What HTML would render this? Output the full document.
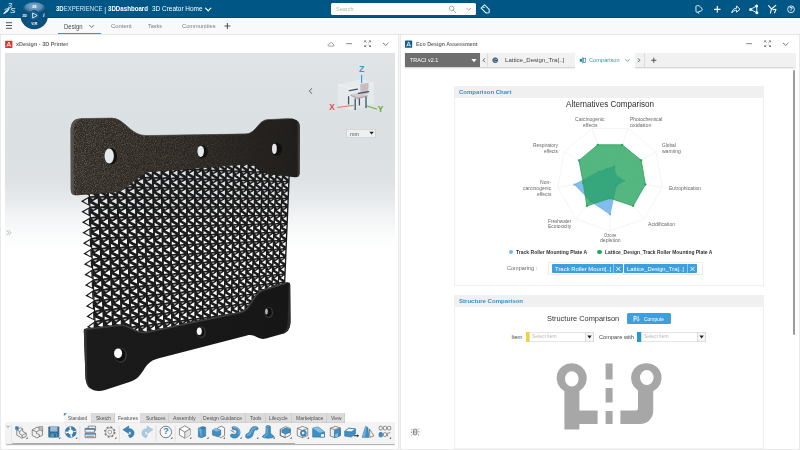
<!DOCTYPE html>
<html lang="en"><head><meta charset="utf-8"><title>3DEXPERIENCE | 3DDashboard - 3D Creator Home</title>
<style>
html,body{margin:0;padding:0}
body{width:800px;height:450px;overflow:hidden;position:relative;background:#f5f5f5;font-family:"Liberation Sans",sans-serif;}
div,header,nav,section,main,svg.a,.t{position:absolute;box-sizing:border-box}
.t{white-space:nowrap;transform-origin:0 50%;display:block}
svg{overflow:visible}
</style></head><body>
<header style="left:0px;top:0px;width:800px;height:18.2px;background:#005685;box-shadow:inset 0 -0.7px 0 #004873;">
<span class="t" style="left:7.79px;top:1.48px;font-size:7.6px;line-height:9.12px;color:#fff;font-style:italic;">3</span>
<span class="t" style="left:9.9px;top:6.26px;font-size:7.8px;line-height:9.36px;color:#fff;font-style:italic;">S</span>
<svg class="a" style="left:2px;top:7px" width="9" height="9" viewBox="2 7 9 9" >
<path d="M2.8 14.6 C4.2 11.4 6.6 9.4 9.8 8.2 C9.2 10.8 6.8 12.8 2.8 14.6 Z" fill="#e8f1f7"/><path d="M4.4 9.6 C6 8.8 7.6 8.5 9.4 8.4" stroke="#fff" stroke-width="0.7" fill="none"/>
</svg>
<span class="t" style="left:55.5px;top:5.23px;font-size:7px;line-height:8.4px;color:#dbe8f1;transform:scaleX(0.860);"><b style="color:#fff">3D</b>EXPERIENCE</span>
<span class="t" style="left:104.2px;top:4.64px;font-size:7.5px;line-height:9px;color:#dbe8f1;">|</span>
<span class="t" style="left:108px;top:5.23px;font-size:7px;line-height:8.4px;color:#fff;font-weight:bold;transform:scaleX(0.879);">3DDashboard</span>
<span class="t" style="left:152px;top:5.23px;font-size:7px;line-height:8.4px;color:#fff;transform:scaleX(0.922);">3D Creator Home</span>
<svg class="a" style="left:204px;top:5px" width="9" height="9" viewBox="204 5 9 9" >
<path d="M205.6 8.2 L208.2 10.8 L210.8 8.2" fill="none" stroke="#fff" stroke-width="1.2" stroke-linecap="round" stroke-linejoin="round"/>
</svg>
<div style="left:331.2px;top:3px;width:145px;height:12px;background:#fff;border-radius:1.5px;">
<span class="t" style="left:5.1px;top:2.94px;font-size:5.6px;line-height:6.72px;color:#b3b3b3;transform:scaleX(0.986);">Search</span>
<svg class="a" style="left:114.8px;top:0px" width="30" height="12" viewBox="446 3 30 12" >
<circle cx="451.6" cy="8.4" r="2.3" fill="none" stroke="#8a8a8a" stroke-width="0.7"/><path d="M453.3 10.2 L455.6 12.6" stroke="#8a8a8a" stroke-width="0.8" stroke-linecap="round"/>
<path d="M466.9 8.3 L468.8 10.2 L470.7 8.3" fill="none" stroke="#777" stroke-width="0.7" stroke-linecap="round" stroke-linejoin="round"/>
</svg>
</div>
<svg class="a" style="left:480px;top:0px" width="320" height="18" viewBox="480 0 320 18" >
<g transform="translate(485.8 9.4) rotate(-45)"><path d="M-4.2 -2.4 H2.6 L4.6 0 L2.6 2.4 H-4.2 Z" transform="rotate(90)" fill="none" stroke="#fff" stroke-width="1" stroke-linejoin="round"/></g>
<circle cx="483.9" cy="7.4" r="0.7" fill="#fff"/>
<path d="M696.2 6 C697.7 4.8 700.2 5.7 702 8.9 C702.6 9.9 702 10.7 701.1 10.9 L697.4 12.3 C696.5 12.6 696 12 696 11.2 Z M698 12.2 L698.8 13.4" fill="none" stroke="#fff" stroke-width="0.9" stroke-linejoin="round" stroke-linecap="round"/>
<path d="M714.1 9.3 H720.5 M717.3 6.1 V12.5" stroke="#fff" stroke-width="1.15" fill="none"/>
<path d="M731.8 12.9 C732.2 9.6 734.2 8.2 736.6 8.2 V6 L740 9.2 L736.6 12.2 V10.2 C734.6 10.2 733 11 731.8 12.9 Z" fill="none" stroke="#fff" stroke-width="0.9" stroke-linejoin="round"/>
<path d="M750.6 9.4 L756.6 5.9 L756.9 12.8 Z" fill="none" stroke="#fff" stroke-width="0.9"/><circle cx="750.6" cy="9.4" r="1.5" fill="#fff"/><circle cx="756.6" cy="5.9" r="1.5" fill="#fff"/><circle cx="756.9" cy="12.8" r="1.5" fill="#fff"/>
<path d="M768.6 5.6 L771.4 9 L775.8 5.4 M771.4 9 L770.4 13.2 M773 9.6 L776 9.2 L774.6 12.8" fill="none" stroke="#fff" stroke-width="1.1" stroke-linecap="round" stroke-linejoin="round"/>
<circle cx="791" cy="9.3" r="3.4" fill="none" stroke="#fff" stroke-width="0.85"/>
</svg>
<span class="t" style="left:789.29px;top:6.14px;font-size:5.6px;line-height:6.72px;color:#fff;font-weight:bold;">?</span>
</header>
<nav style="left:0px;top:18.2px;width:800px;height:16.4px;background:#f9f9f9;box-shadow:inset 0 -0.8px 0 #dcdcdc;">
<svg class="a" style="left:4px;top:1.8px" width="12" height="12" viewBox="4 20 12 12" >
<path d="M6 22.7 H12 M6 25.5 H12 M6 28.3 H12" stroke="#555" stroke-width="1" fill="none"/>
</svg>
<span class="t" style="left:64px;top:4.48px;font-size:6.4px;line-height:7.68px;color:#4a4a4a;transform:scaleX(0.934);">Design</span>
<svg class="a" style="left:88px;top:3.8px" width="8" height="8" viewBox="88 22 8 8" >
<path d="M89.6 25.4 L91.7 27.5 L93.8 25.4" fill="none" stroke="#555" stroke-width="0.8" stroke-linecap="round" stroke-linejoin="round"/>
</svg>
<div style="left:58px;top:15.1px;width:43.2px;height:1.2px;background:#4a90c4;">
</div>
<span class="t" style="left:110.9px;top:4.71px;font-size:6px;line-height:7.2px;color:#7d7d7d;transform:scaleX(0.980);">Content</span>
<span class="t" style="left:148.1px;top:4.71px;font-size:6px;line-height:7.2px;color:#7d7d7d;transform:scaleX(0.913);">Tasks</span>
<span class="t" style="left:181.7px;top:4.71px;font-size:6px;line-height:7.2px;color:#7d7d7d;transform:scaleX(0.957);">Communities</span>
<svg class="a" style="left:222px;top:2.8px" width="10" height="10" viewBox="222 21 10 10" >
<path d="M224.4 26 H230.4 M227.4 23 V29" stroke="#555" stroke-width="1.1" fill="none"/>
</svg>
</nav>
<svg class="a" style="left:18px;top:0px" width="34" height="32" viewBox="18 0 34 32" >
<defs><radialGradient id="cg" cx="0.5" cy="0.3" r="0.6"><stop offset="0" stop-color="#8ab3cf"/><stop offset="0.6" stop-color="#5a90b5" stop-opacity="0.9"/><stop offset="1" stop-color="#0b517f" stop-opacity="0"/></radialGradient></defs>
<circle cx="34.2" cy="15.5" r="13.8" fill="#0b4f7d"/>
<ellipse cx="34.2" cy="8.9" rx="11.4" ry="6.6" fill="url(#cg)"/>
<circle cx="34.2" cy="15.5" r="5.1" fill="#12608f" stroke="#0a4770" stroke-width="0.6"/>
<path d="M32.6 12.9 L37.2 15.5 L32.6 18.1 Z" fill="none" stroke="#fff" stroke-width="0.8" stroke-linejoin="round"/>
<path d="M27.2 22.6 L29.4 20.4 M41.2 22.6 L39 20.4 M27.4 8.6 L29.4 10.6 M41 8.6 L39 10.6" stroke="#3f7da6" stroke-width="0.4"/>
</svg>
<span class="t" style="left:22.3px;top:13.5px;font-size:3.6px;line-height:4.32px;color:#fff;font-weight:bold;">3D</span>
<span class="t" style="left:31.21px;top:21.99px;font-size:3.8px;line-height:4.56px;color:#fff;font-weight:bold;">V,R</span>
<span class="t" style="left:42.91px;top:11.69px;font-size:5px;line-height:6px;color:#fff;font-weight:bold;font-style:italic;">i</span>
<span class="t" style="left:32px;top:4.5px;font-size:3.6px;line-height:4.32px;color:#fff;font-weight:bold;font-style:italic;">3S</span>
<section style="left:1px;top:35px;width:397.2px;height:413.6px;background:#fff;box-shadow:0 0 0 0.7px #e4e4e4;">
<svg class="a" style="left:4px;top:5px" width="8" height="8" viewBox="5 40 8 8" >
<rect x="5.2" y="40.8" width="7.2" height="7.2" rx="0.5" fill="#d9352b"/><path d="M6.8 46.6 L8.8 42 L10.8 46.6 M7.3 45.4 H10.3" fill="none" stroke="#fff" stroke-width="0.8"/>
</svg>
<span class="t" style="left:15.4px;top:6.36px;font-size:5.4px;line-height:6.48px;color:#6b6b6b;font-weight:bold;transform:scaleX(1.015);">xDesign - 3D Printer</span>
<svg class="a" style="left:319px;top:3px" width="76" height="12" viewBox="320 38 76 12" >
<path d="M328.6 46.1 H333 C334.2 46.1 334.4 44.4 333 44.2 C332.9 42.3 330.3 42 329.8 43.7 C328 43.5 327.6 45.9 328.6 46.1 Z" fill="none" stroke="#666" stroke-width="0.6" stroke-linejoin="round"/>
<path d="M346.2 43.7 H352" stroke="#666" stroke-width="0.8"/>
<path d="M364.4 40.5 h2.0 l-2.0 2.0 Z M370.8 40.5 h-2.0 l2.0 2.0 Z M364.4 46.9 h2.0 l-2.0 -2.0 Z M370.8 46.9 h-2.0 l2.0 -2.0 Z" fill="#555"/><path d="M365.0 41.1 L366.7 42.8 M370.2 41.1 L368.5 42.8 M365.0 46.3 L366.7 44.6 M370.2 46.3 L368.5 44.6" stroke="#555" stroke-width="0.6" fill="none"/>
<path d="M383.3 43.2 L385.7 45.4 L388.1 43.2" fill="none" stroke="#555" stroke-width="0.8" stroke-linecap="round" stroke-linejoin="round"/>
</svg>
<div style="left:4px;top:18px;width:389.7px;height:395.5px;background:linear-gradient(180deg,#e0e4e7 0%,#dce1e4 12%,#dbe0e3 24%,#dee2e5 32%,#e8ebed 37.5%,#f2f4f5 41.5%,#fbfcfc 46.5%,#fff 50%);overflow:hidden;">
<svg class="a" style="left:0px;top:0px" width="389.7" height="395.5" viewBox="5 53 389.7 395.5" >
<defs>
<filter id="spk" x="0" y="0" width="100%" height="100%"><feTurbulence type="fractalNoise" baseFrequency="1.1" numOctaves="2" seed="3" result="n"/><feColorMatrix in="n" type="matrix" values="0 0 0 0 0.46  0 0 0 0 0.36  0 0 0 0 0.25  1.3 0 0 0 -0.50" result="c"/><feComposite in="c" in2="SourceGraphic" operator="in"/></filter>
<linearGradient id="tb" x1="0" y1="0" x2="1" y2="0"><stop offset="0" stop-color="#2f2b27"/><stop offset="0.5" stop-color="#2a2623"/><stop offset="1" stop-color="#1f1d1b"/></linearGradient>
<linearGradient id="bb" x1="0" y1="0" x2="1" y2="0"><stop offset="0" stop-color="#1b1b1b"/><stop offset="1" stop-color="#161616"/></linearGradient>
<linearGradient id="spg" x1="70" y1="0" x2="300" y2="0" gradientUnits="userSpaceOnUse"><stop offset="0" stop-color="#fff" stop-opacity="0.75"/><stop offset="0.45" stop-color="#fff" stop-opacity="0.5"/><stop offset="0.8" stop-color="#fff" stop-opacity="0.12"/><stop offset="1" stop-color="#fff" stop-opacity="0.05"/></linearGradient><mask id="spm" maskUnits="userSpaceOnUse" x="60" y="110" width="250" height="100"><rect x="60" y="110" width="250" height="100" fill="url(#spg)"/></mask>
<linearGradient id="bgg" gradientUnits="userSpaceOnUse" x1="0" y1="53" x2="0" y2="448.5"><stop offset="0" stop-color="#e0e4e7"/><stop offset="0.12" stop-color="#dce1e4"/><stop offset="0.24" stop-color="#dbe0e3"/><stop offset="0.32" stop-color="#dee2e5"/><stop offset="0.375" stop-color="#e8ebed"/><stop offset="0.415" stop-color="#f2f4f5"/><stop offset="0.465" stop-color="#fbfcfc"/><stop offset="0.5" stop-color="#fff"/></linearGradient>
</defs>
<path d="M87.0 155.4 L289.5 164.9 L283.1 316.1 L95.3 342.6 Z" fill="#1c1c1c"/>
<path d="M87.4 155.0L78.8 159.4L87.8 164.5ZM87.8 165.4L79.3 169.9L88.3 174.9ZM88.3 175.8L79.8 180.3L88.7 185.3ZM88.8 186.2L80.3 190.8L89.2 195.7ZM89.2 196.6L80.8 201.3L89.6 206.1ZM89.7 207.0L81.3 211.8L90.1 216.5ZM90.1 217.4L81.8 222.3L90.6 226.9ZM90.6 227.8L82.3 232.8L91.0 237.3ZM91.1 238.2L82.8 243.3L91.5 247.7ZM91.5 248.5L83.3 253.7L92.0 258.1ZM92.0 258.9L83.8 264.2L92.4 268.5ZM92.5 269.3L84.3 274.7L92.9 278.9ZM92.9 279.7L84.8 285.2L93.4 289.3ZM93.4 290.1L85.3 295.7L93.8 299.7ZM93.9 300.5L85.8 306.2L94.3 310.1ZM94.3 310.9L86.3 316.6L94.7 320.5ZM94.8 321.3L86.8 327.1L95.2 330.9ZM95.2 331.7L87.3 337.6L95.7 341.3Z" fill="#1c1c1c"/>
<path d="M289.5 164.9 L283.1 316.1" stroke="#1c1c1c" stroke-width="1.6"/>
<path d="M89.0 156.2L93.3 156.2L91.0 158.1ZM89.4 166.6L93.7 166.5L91.4 168.5ZM89.9 177.0L94.1 176.9L91.9 178.9ZM90.3 187.3L94.6 187.2L92.3 189.2ZM90.8 197.7L95.0 197.5L92.8 199.6ZM91.2 208.1L95.5 207.9L93.2 210.0ZM91.7 218.5L95.9 218.2L93.7 220.3ZM92.2 228.9L96.3 228.6L94.1 230.7ZM92.6 239.2L96.8 238.9L94.6 241.0ZM93.1 249.6L97.2 249.2L95.0 251.4ZM93.5 260.0L97.7 259.6L95.5 261.8ZM94.0 270.4L98.1 269.9L95.9 272.1ZM94.4 280.8L98.5 280.3L96.4 282.5ZM94.9 291.2L99.0 290.6L96.8 292.9ZM95.4 301.5L99.4 300.9L97.3 303.2ZM95.8 311.9L99.9 311.3L97.7 313.6ZM96.3 322.3L100.3 321.6L98.2 323.9ZM96.7 332.7L100.7 332.0L98.6 334.3ZM98.7 156.6L102.9 156.6L100.7 158.6ZM99.1 166.9L103.3 166.9L101.1 168.8ZM99.6 177.2L103.7 177.1L101.5 179.1ZM100.0 187.5L104.2 187.4L101.9 189.4ZM100.4 197.8L104.6 197.6L102.4 199.6ZM100.8 208.1L105.0 207.9L102.8 209.9ZM101.2 218.4L105.4 218.1L103.2 220.2ZM101.6 228.6L105.8 228.3L103.6 230.4ZM102.1 238.9L106.2 238.6L104.0 240.7ZM102.5 249.2L106.6 248.8L104.4 251.0ZM102.9 259.5L107.0 259.1L104.8 261.2ZM103.3 269.8L107.4 269.3L105.2 271.5ZM103.7 280.1L107.8 279.6L105.6 281.8ZM104.1 290.4L108.2 289.8L106.0 292.0ZM104.6 300.6L108.6 300.0L106.5 302.3ZM105.0 310.9L109.0 310.3L106.9 312.6ZM105.4 321.2L109.4 320.5L107.3 322.8ZM105.8 331.5L109.8 330.8L107.7 333.1ZM108.3 157.1L112.5 157.1L110.3 159.0ZM108.7 167.3L112.8 167.2L110.7 169.2ZM109.1 177.5L113.2 177.4L111.0 179.3ZM109.5 187.7L113.6 187.5L111.4 189.5ZM109.8 197.8L113.9 197.7L111.8 199.7ZM110.2 208.0L114.3 207.8L112.1 209.9ZM110.6 218.2L114.7 218.0L112.5 220.0ZM111.0 228.4L115.0 228.1L112.9 230.2ZM111.4 238.6L115.4 238.3L113.3 240.4ZM111.7 248.8L115.7 248.4L113.6 250.6ZM112.1 259.0L116.1 258.6L114.0 260.7ZM112.5 269.2L116.5 268.7L114.4 270.9ZM112.9 279.4L116.8 278.9L114.7 281.1ZM113.2 289.6L117.2 289.0L115.1 291.2ZM113.6 299.8L117.6 299.2L115.5 301.4ZM114.0 309.9L117.9 309.3L115.9 311.6ZM114.4 320.1L118.3 319.5L116.2 321.8ZM114.8 330.3L118.6 329.6L116.6 331.9ZM117.8 157.5L121.9 157.5L119.7 159.4ZM118.1 167.6L122.2 167.6L120.0 169.5ZM118.5 177.7L122.5 177.6L120.4 179.6ZM118.8 187.8L122.8 187.7L120.7 189.7ZM119.1 197.9L123.2 197.7L121.0 199.7ZM119.5 208.0L123.5 207.8L121.4 209.8ZM119.8 218.1L123.8 217.9L121.7 219.9ZM120.2 228.2L124.1 227.9L122.0 230.0ZM120.5 238.3L124.5 238.0L122.4 240.1ZM120.8 248.4L124.8 248.0L122.7 250.1ZM121.2 258.5L125.1 258.1L123.0 260.2ZM121.5 268.6L125.4 268.1L123.4 270.3ZM121.9 278.7L125.8 278.2L123.7 280.4ZM122.2 288.8L126.1 288.3L124.0 290.5ZM122.5 298.9L126.4 298.3L124.4 300.5ZM122.9 309.0L126.7 308.4L124.7 310.6ZM123.2 319.1L127.0 318.4L125.0 320.7ZM123.6 329.2L127.4 328.5L125.4 330.8ZM127.1 158.0L131.1 157.9L129.0 159.8ZM127.4 168.0L131.4 167.9L129.2 169.8ZM127.7 178.0L131.7 177.9L129.5 179.8ZM128.0 188.0L132.0 187.8L129.8 189.8ZM128.3 198.0L132.2 197.8L130.1 199.8ZM128.6 208.0L132.5 207.8L130.4 209.8ZM128.9 218.0L132.8 217.7L130.7 219.8ZM129.2 228.0L133.1 227.7L131.0 229.7ZM129.5 238.0L133.4 237.7L131.3 239.7ZM129.8 248.0L133.7 247.6L131.6 249.7ZM130.1 258.0L134.0 257.6L131.9 259.7ZM130.4 268.0L134.2 267.6L132.2 269.7ZM130.7 278.0L134.5 277.5L132.5 279.7ZM131.0 288.0L134.8 287.5L132.8 289.7ZM131.3 298.0L135.1 297.5L133.1 299.7ZM131.6 308.0L135.4 307.4L133.4 309.6ZM131.9 318.0L135.7 317.4L133.7 319.6ZM132.2 328.0L136.0 327.4L134.0 329.6ZM136.2 158.4L140.2 158.4L138.1 160.2ZM136.5 168.3L140.4 168.2L138.3 170.1ZM136.7 178.2L140.7 178.1L138.6 180.0ZM137.0 188.1L140.9 188.0L138.8 189.9ZM137.3 198.0L141.2 197.9L139.1 199.8ZM137.5 208.0L141.4 207.7L139.4 209.7ZM137.8 217.9L141.7 217.6L139.6 219.6ZM138.1 227.8L141.9 227.5L139.9 229.5ZM138.3 237.7L142.2 237.4L140.1 239.4ZM138.6 247.6L142.4 247.2L140.4 249.3ZM138.9 257.5L142.7 257.1L140.6 259.2ZM139.1 267.4L142.9 267.0L140.9 269.1ZM139.4 277.4L143.2 276.9L141.2 279.0ZM139.7 287.3L143.4 286.8L141.4 288.9ZM139.9 297.2L143.7 296.6L141.7 298.8ZM140.2 307.1L143.9 306.5L141.9 308.7ZM140.5 317.0L144.2 316.4L142.2 318.6ZM140.7 326.9L144.4 326.3L142.5 328.5ZM145.2 158.8L149.1 158.8L147.0 160.6ZM145.4 168.6L149.3 168.6L147.2 170.5ZM145.7 178.4L149.5 178.4L147.5 180.3ZM145.9 188.3L149.7 188.1L147.7 190.1ZM146.1 198.1L150.0 197.9L147.9 199.9ZM146.3 207.9L150.2 207.7L148.1 209.7ZM146.6 217.8L150.4 217.5L148.3 219.5ZM146.8 227.6L150.6 227.3L148.6 229.3ZM147.0 237.4L150.8 237.1L148.8 239.1ZM147.3 247.2L151.0 246.9L149.0 248.9ZM147.5 257.1L151.2 256.7L149.2 258.7ZM147.7 266.9L151.4 266.4L149.5 268.5ZM148.0 276.7L151.7 276.2L149.7 278.3ZM148.2 286.5L151.9 286.0L149.9 288.2ZM148.4 296.4L152.1 295.8L150.1 298.0ZM148.6 306.2L152.3 305.6L150.3 307.8ZM148.9 316.0L152.5 315.4L150.6 317.6ZM149.1 325.8L152.7 325.2L150.8 327.4ZM154.0 159.2L157.9 159.2L155.8 161.0ZM154.2 168.9L158.1 168.9L156.0 170.8ZM154.4 178.7L158.2 178.6L156.2 180.5ZM154.6 188.4L158.4 188.3L156.4 190.2ZM154.8 198.2L158.6 198.0L156.6 199.9ZM155.0 207.9L158.8 207.7L156.8 209.6ZM155.2 217.6L159.0 217.4L156.9 219.4ZM155.4 227.4L159.1 227.1L157.1 229.1ZM155.6 237.1L159.3 236.8L157.3 238.8ZM155.8 246.9L159.5 246.5L157.5 248.5ZM156.0 256.6L159.7 256.2L157.7 258.3ZM156.2 266.3L159.8 265.9L157.9 268.0ZM156.4 276.1L160.0 275.6L158.1 277.7ZM156.6 285.8L160.2 285.3L158.3 287.4ZM156.8 295.5L160.4 295.0L158.4 297.1ZM156.9 305.3L160.6 304.7L158.6 306.9ZM157.1 315.0L160.7 314.4L158.8 316.6ZM157.3 324.8L160.9 324.1L159.0 326.3ZM162.8 159.6L166.5 159.6L164.5 161.4ZM162.9 169.3L166.7 169.2L164.6 171.1ZM163.1 178.9L166.8 178.8L164.8 180.7ZM163.2 188.6L167.0 188.4L164.9 190.3ZM163.4 198.2L167.1 198.1L165.1 200.0ZM163.5 207.9L167.2 207.7L165.3 209.6ZM163.7 217.5L167.4 217.3L165.4 219.2ZM163.9 227.2L167.5 226.9L165.6 228.9ZM164.0 236.8L167.7 236.5L165.7 238.5ZM164.2 246.5L167.8 246.1L165.9 248.1ZM164.3 256.1L168.0 255.7L166.0 257.8ZM164.5 265.8L168.1 265.4L166.2 267.4ZM164.6 275.4L168.2 275.0L166.3 277.1ZM164.8 285.1L168.4 284.6L166.5 286.7ZM165.0 294.7L168.5 294.2L166.6 296.3ZM165.1 304.4L168.7 303.8L166.8 306.0ZM165.3 314.1L168.8 313.4L166.9 315.6ZM165.4 323.7L169.0 323.1L167.1 325.2ZM171.3 160.0L175.0 160.0L173.0 161.8ZM171.4 169.6L175.1 169.5L173.1 171.4ZM171.6 179.1L175.2 179.1L173.3 180.9ZM171.7 188.7L175.4 188.6L173.4 190.5ZM171.8 198.3L175.5 198.1L173.5 200.0ZM171.9 207.8L175.6 207.6L173.6 209.6ZM172.1 217.4L175.7 217.2L173.7 219.1ZM172.2 227.0L175.8 226.7L173.8 228.7ZM172.3 236.6L175.9 236.2L174.0 238.2ZM172.4 246.1L176.0 245.8L174.1 247.8ZM172.5 255.7L176.1 255.3L174.2 257.3ZM172.7 265.3L176.2 264.8L174.3 266.9ZM172.8 274.8L176.3 274.4L174.4 276.4ZM172.9 284.4L176.4 283.9L174.5 286.0ZM173.0 294.0L176.5 293.4L174.7 295.5ZM173.2 303.5L176.7 303.0L174.8 305.1ZM173.3 313.1L176.8 312.5L174.9 314.6ZM173.4 322.7L176.9 322.0L175.0 324.2ZM179.7 160.4L183.4 160.4L181.4 162.2ZM179.8 169.9L183.5 169.8L181.5 171.6ZM179.9 179.4L183.5 179.3L181.6 181.1ZM180.0 188.9L183.6 188.7L181.7 190.6ZM180.1 198.3L183.7 198.2L181.7 200.1ZM180.2 207.8L183.8 207.6L181.8 209.5ZM180.3 217.3L183.8 217.1L181.9 219.0ZM180.4 226.8L183.9 226.5L182.0 228.5ZM180.4 236.3L184.0 236.0L182.1 237.9ZM180.5 245.8L184.1 245.4L182.2 247.4ZM180.6 255.2L184.1 254.9L182.2 256.9ZM180.7 264.7L184.2 264.3L182.3 266.3ZM180.8 274.2L184.3 273.8L182.4 275.8ZM180.9 283.7L184.4 283.2L182.5 285.3ZM181.0 293.2L184.4 292.7L182.6 294.7ZM181.1 302.7L184.5 302.1L182.6 304.2ZM181.2 312.2L184.6 311.6L182.7 313.7ZM181.3 321.6L184.7 321.0L182.8 323.1ZM188.0 160.8L191.6 160.8L189.7 162.5ZM188.1 170.2L191.7 170.1L189.7 171.9ZM188.1 179.6L191.7 179.5L189.8 181.3ZM188.2 189.0L191.7 188.9L189.8 190.7ZM188.2 198.4L191.8 198.2L189.9 200.1ZM188.3 207.8L191.8 207.6L189.9 209.5ZM188.4 217.2L191.9 217.0L190.0 218.9ZM188.4 226.6L191.9 226.3L190.0 228.3ZM188.5 236.0L191.9 235.7L190.1 237.6ZM188.5 245.4L192.0 245.1L190.1 247.0ZM188.6 254.8L192.0 254.4L190.2 256.4ZM188.6 264.2L192.1 263.8L190.2 265.8ZM188.7 273.6L192.1 273.2L190.3 275.2ZM188.7 283.0L192.1 282.5L190.3 284.6ZM188.8 292.4L192.2 291.9L190.3 294.0ZM188.9 301.8L192.2 301.3L190.4 303.3ZM188.9 311.2L192.3 310.6L190.4 312.7ZM189.0 320.6L192.3 320.0L190.5 322.1ZM196.2 161.2L199.7 161.1L197.8 162.9ZM196.2 170.5L199.7 170.4L197.8 172.2ZM196.2 179.8L199.7 179.7L197.8 181.5ZM196.2 189.1L199.7 189.0L197.8 190.8ZM196.3 198.4L199.7 198.3L197.8 200.1ZM196.3 207.8L199.7 207.6L197.9 209.4ZM196.3 217.1L199.8 216.9L197.9 218.7ZM196.3 226.4L199.8 226.2L197.9 228.1ZM196.3 235.7L199.8 235.4L197.9 237.4ZM196.4 245.1L199.8 244.7L197.9 246.7ZM196.4 254.4L199.8 254.0L197.9 256.0ZM196.4 263.7L199.8 263.3L198.0 265.3ZM196.4 273.0L199.8 272.6L198.0 274.6ZM196.5 282.4L199.8 281.9L198.0 283.9ZM196.5 291.7L199.8 291.2L198.0 293.2ZM196.5 301.0L199.8 300.4L198.0 302.5ZM196.5 310.3L199.8 309.7L198.0 311.8ZM196.6 319.6L199.8 319.0L198.1 321.1ZM204.2 161.5L207.7 161.5L205.8 163.3ZM204.2 170.8L207.6 170.7L205.7 172.5ZM204.2 180.0L207.6 179.9L205.7 181.7ZM204.2 189.3L207.6 189.1L205.7 190.9ZM204.1 198.5L207.6 198.3L205.7 200.2ZM204.1 207.7L207.5 207.6L205.7 209.4ZM204.1 217.0L207.5 216.8L205.7 218.6ZM204.1 226.2L207.5 226.0L205.6 227.9ZM204.1 235.5L207.5 235.2L205.6 237.1ZM204.1 244.7L207.5 244.4L205.6 246.3ZM204.1 254.0L207.4 253.6L205.6 255.5ZM204.1 263.2L207.4 262.8L205.6 264.8ZM204.1 272.4L207.4 272.0L205.6 274.0ZM204.1 281.7L207.4 281.2L205.6 283.2ZM204.0 290.9L207.3 290.4L205.5 292.5ZM204.0 300.2L207.3 299.6L205.5 301.7ZM204.0 309.4L207.3 308.8L205.5 310.9ZM204.0 318.7L207.3 318.1L205.5 320.1ZM212.1 161.9L215.5 161.9L213.6 163.6ZM212.0 171.1L215.4 171.0L213.6 172.8ZM212.0 180.2L215.4 180.1L213.5 181.9ZM211.9 189.4L215.3 189.3L213.5 191.1ZM211.9 198.6L215.3 198.4L213.4 200.2ZM211.9 207.7L215.2 207.5L213.4 209.4ZM211.8 216.9L215.2 216.7L213.3 218.5ZM211.8 226.1L215.1 225.8L213.3 227.7ZM211.7 235.2L215.0 234.9L213.2 236.8ZM211.7 244.4L215.0 244.1L213.2 246.0ZM211.7 253.5L214.9 253.2L213.1 255.1ZM211.6 262.7L214.9 262.3L213.1 264.3ZM211.6 271.9L214.8 271.4L213.0 273.4ZM211.5 281.0L214.8 280.6L213.0 282.6ZM211.5 290.2L214.7 289.7L212.9 291.7ZM211.4 299.4L214.7 298.8L212.9 300.9ZM211.4 308.5L214.6 308.0L212.8 310.0ZM211.4 317.7L214.5 317.1L212.8 319.2ZM219.8 162.3L223.2 162.2L221.3 164.0ZM219.8 171.3L223.1 171.3L221.3 173.0ZM219.7 180.4L223.0 180.3L221.2 182.1ZM219.6 189.5L222.9 189.4L221.1 191.2ZM219.5 198.6L222.8 198.5L221.0 200.3ZM219.5 207.7L222.8 207.5L220.9 209.3ZM219.4 216.8L222.7 216.6L220.9 218.4ZM219.3 225.9L222.6 225.6L220.8 227.5ZM219.2 235.0L222.5 234.7L220.7 236.5ZM219.2 244.1L222.4 243.7L220.6 245.6ZM219.1 253.1L222.3 252.8L220.5 254.7ZM219.0 262.2L222.2 261.8L220.5 263.8ZM218.9 271.3L222.2 270.9L220.4 272.8ZM218.9 280.4L222.1 280.0L220.3 281.9ZM218.8 289.5L222.0 289.0L220.2 291.0ZM218.7 298.6L221.9 298.1L220.2 300.1ZM218.7 307.7L221.8 307.1L220.1 309.1ZM218.6 316.8L221.7 316.2L220.0 318.2ZM227.5 162.6L230.8 162.6L228.9 164.3ZM227.4 171.6L230.7 171.6L228.8 173.3ZM227.2 180.6L230.5 180.5L228.7 182.3ZM227.1 189.7L230.4 189.5L228.6 191.3ZM227.0 198.7L230.3 198.5L228.5 200.3ZM226.9 207.7L230.2 207.5L228.4 209.3ZM226.8 216.7L230.1 216.5L228.3 218.3ZM226.7 225.7L230.0 225.4L228.2 227.3ZM226.6 234.7L229.8 234.4L228.1 236.3ZM226.5 243.7L229.7 243.4L228.0 245.3ZM226.4 252.7L229.6 252.4L227.8 254.3ZM226.3 261.8L229.5 261.4L227.7 263.3ZM226.2 270.8L229.4 270.3L227.6 272.3ZM226.1 279.8L229.2 279.3L227.5 281.3ZM226.0 288.8L229.1 288.3L227.4 290.3ZM225.9 297.8L229.0 297.3L227.3 299.3ZM225.8 306.8L228.9 306.3L227.2 308.3ZM225.7 315.8L228.8 315.3L227.1 317.3ZM235.0 163.0L238.2 162.9L236.4 164.6ZM234.8 171.9L238.1 171.8L236.3 173.6ZM234.7 180.8L237.9 180.7L236.1 182.5ZM234.6 189.8L237.8 189.7L236.0 191.4ZM234.4 198.7L237.6 198.6L235.9 200.3ZM234.3 207.7L237.5 207.5L235.7 209.3ZM234.2 216.6L237.3 216.4L235.6 218.2ZM234.0 225.5L237.2 225.3L235.4 227.1ZM233.9 234.5L237.0 234.2L235.3 236.0ZM233.8 243.4L236.9 243.1L235.2 245.0ZM233.6 252.3L236.7 252.0L235.0 253.9ZM233.5 261.3L236.6 260.9L234.9 262.8ZM233.3 270.2L236.5 269.8L234.7 271.7ZM233.2 279.2L236.3 278.7L234.6 280.6ZM233.1 288.1L236.2 287.6L234.5 289.6ZM232.9 297.0L236.0 296.5L234.3 298.5ZM232.8 306.0L235.9 305.4L234.2 307.4ZM232.7 314.9L235.7 314.3L234.0 316.3ZM242.3 163.3L245.6 163.3L243.8 165.0ZM242.2 172.2L245.4 172.1L243.6 173.8ZM242.0 181.0L245.2 180.9L243.4 182.7ZM241.9 189.9L245.0 189.8L243.3 191.5ZM241.7 198.8L244.8 198.6L243.1 200.4ZM241.5 207.6L244.7 207.4L242.9 209.2ZM241.4 216.5L244.5 216.3L242.8 218.1ZM241.2 225.4L244.3 225.1L242.6 226.9ZM241.0 234.2L244.1 233.9L242.4 235.8ZM240.9 243.1L244.0 242.8L242.2 244.6ZM240.7 252.0L243.8 251.6L242.1 253.5ZM240.5 260.8L243.6 260.5L241.9 262.3ZM240.4 269.7L243.4 269.3L241.7 271.2ZM240.2 278.6L243.3 278.1L241.6 280.0ZM240.0 287.4L243.1 287.0L241.4 288.9ZM239.9 296.3L242.9 295.8L241.2 297.7ZM239.7 305.2L242.7 304.6L241.0 306.6ZM239.6 314.0L242.5 313.5L240.9 315.4ZM249.6 163.6L252.8 163.6L251.0 165.3ZM249.4 172.4L252.6 172.4L250.8 174.1ZM249.2 181.2L252.4 181.1L250.6 182.8ZM249.0 190.0L252.2 189.9L250.4 191.6ZM248.8 198.8L251.9 198.7L250.2 200.4ZM248.6 207.6L251.7 207.4L250.0 209.2ZM248.4 216.4L251.5 216.2L249.8 218.0ZM248.3 225.2L251.3 225.0L249.6 226.7ZM248.1 234.0L251.1 233.7L249.4 235.5ZM247.9 242.8L250.9 242.5L249.2 244.3ZM247.7 251.6L250.7 251.2L249.0 253.1ZM247.5 260.4L250.5 260.0L248.8 261.9ZM247.3 269.2L250.3 268.8L248.6 270.6ZM247.1 278.0L250.1 277.5L248.4 279.4ZM246.9 286.8L249.9 286.3L248.2 288.2ZM246.7 295.5L249.7 295.1L248.0 297.0ZM246.5 304.3L249.5 303.8L247.8 305.8ZM246.3 313.1L249.3 312.6L247.6 314.5ZM256.8 164.0L259.9 163.9L258.1 165.6ZM256.5 172.7L259.6 172.6L257.9 174.3ZM256.3 181.4L259.4 181.3L257.7 183.0ZM256.1 190.1L259.2 190.0L257.4 191.7ZM255.9 198.9L258.9 198.7L257.2 200.4ZM255.6 207.6L258.7 207.4L257.0 209.2ZM255.4 216.3L258.5 216.1L256.8 217.9ZM255.2 225.0L258.2 224.8L256.5 226.6ZM255.0 233.8L258.0 233.5L256.3 235.3ZM254.8 242.5L257.7 242.2L256.1 244.0ZM254.5 251.2L257.5 250.9L255.8 252.7ZM254.3 259.9L257.3 259.6L255.6 261.4ZM254.1 268.7L257.0 268.3L255.4 270.1ZM253.9 277.4L256.8 276.9L255.2 278.8ZM253.6 286.1L256.6 285.6L254.9 287.5ZM253.4 294.8L256.3 294.3L254.7 296.2ZM253.2 303.5L256.1 303.0L254.5 305.0ZM253.0 312.3L255.9 311.7L254.2 313.7ZM263.8 164.3L266.8 164.3L265.1 165.9ZM263.5 173.0L266.6 172.9L264.9 174.6ZM263.3 181.6L266.3 181.5L264.6 183.2ZM263.0 190.3L266.1 190.1L264.4 191.8ZM262.8 198.9L265.8 198.8L264.1 200.5ZM262.5 207.6L265.5 207.4L263.8 209.1ZM262.3 216.2L265.3 216.0L263.6 217.8ZM262.0 224.9L265.0 224.6L263.3 226.4ZM261.8 233.5L264.7 233.3L263.1 235.0ZM261.5 242.2L264.5 241.9L262.8 243.7ZM261.3 250.8L264.2 250.5L262.6 252.3ZM261.0 259.5L263.9 259.1L262.3 261.0ZM260.8 268.1L263.7 267.8L262.0 269.6ZM260.5 276.8L263.4 276.4L261.8 278.2ZM260.3 285.5L263.2 285.0L261.5 286.9ZM260.0 294.1L262.9 293.6L261.3 295.5ZM259.8 302.8L262.6 302.2L261.0 304.2ZM259.5 311.4L262.4 310.9L260.8 312.8ZM270.7 164.6L273.7 164.6L272.0 166.2ZM270.4 173.2L273.4 173.1L271.7 174.8ZM270.1 181.8L273.1 181.7L271.4 183.4ZM269.9 190.4L272.8 190.3L271.2 191.9ZM269.6 199.0L272.5 198.8L270.9 200.5ZM269.3 207.5L272.3 207.4L270.6 209.1ZM269.0 216.1L272.0 215.9L270.3 217.7ZM268.7 224.7L271.7 224.5L270.0 226.2ZM268.5 233.3L271.4 233.0L269.7 234.8ZM268.2 241.9L271.1 241.6L269.4 243.4ZM267.9 250.5L270.8 250.1L269.2 251.9ZM267.6 259.1L270.5 258.7L268.9 260.5ZM267.3 267.6L270.2 267.3L268.6 269.1ZM267.1 276.2L269.9 275.8L268.3 277.7ZM266.8 284.8L269.6 284.4L268.0 286.2ZM266.5 293.4L269.3 292.9L267.7 294.8ZM266.2 302.0L269.0 301.5L267.5 303.4ZM265.9 310.6L268.8 310.0L267.2 311.9ZM277.5 164.9L280.5 164.9L278.8 166.5ZM277.2 173.5L280.1 173.4L278.5 175.0ZM276.9 182.0L279.8 181.9L278.2 183.5ZM276.6 190.5L279.5 190.4L277.9 192.0ZM276.3 199.0L279.2 198.9L277.5 200.5ZM276.0 207.5L278.9 207.3L277.2 209.1ZM275.7 216.0L278.5 215.8L276.9 217.6ZM275.4 224.6L278.2 224.3L276.6 226.1ZM275.0 233.1L277.9 232.8L276.3 234.6ZM274.7 241.6L277.6 241.3L276.0 243.1ZM274.4 250.1L277.3 249.8L275.7 251.6ZM274.1 258.6L277.0 258.3L275.4 260.1ZM273.8 267.2L276.6 266.8L275.0 268.6ZM273.5 275.7L276.3 275.3L274.7 277.1ZM273.2 284.2L276.0 283.7L274.4 285.6ZM272.9 292.7L275.7 292.2L274.1 294.1ZM272.6 301.2L275.4 300.7L273.8 302.6ZM272.3 309.7L275.0 309.2L273.5 311.1ZM284.2 165.2L287.1 165.2L285.5 166.8ZM283.9 173.7L286.8 173.6L285.1 175.3ZM283.5 182.1L286.4 182.1L284.8 183.7ZM283.2 190.6L286.1 190.5L284.4 192.1ZM282.9 199.1L285.7 198.9L284.1 200.6ZM282.5 207.5L285.4 207.3L283.8 209.0ZM282.2 216.0L285.0 215.8L283.4 217.5ZM281.9 224.4L284.7 224.2L283.1 225.9ZM281.5 232.9L284.3 232.6L282.7 234.3ZM281.2 241.3L284.0 241.0L282.4 242.8ZM280.9 249.8L283.6 249.4L282.1 251.2ZM280.5 258.2L283.3 257.9L281.7 259.7ZM280.2 266.7L283.0 266.3L281.4 268.1ZM279.8 275.1L282.6 274.7L281.0 276.5ZM279.5 283.6L282.3 283.1L280.7 285.0ZM279.2 292.0L281.9 291.6L280.4 293.4ZM278.8 300.5L281.6 300.0L280.0 301.8ZM278.5 308.9L281.2 308.4L279.7 310.3Z" fill="#a9acae"/>
<path d="M81.5 159.5L86.0 156.9L86.3 162.5ZM82.0 170.0L86.5 167.3L86.8 172.9ZM82.5 180.4L87.0 177.7L87.2 183.3ZM83.0 190.9L87.4 188.1L87.7 193.7ZM83.4 201.3L87.9 198.5L88.2 204.2ZM83.9 211.8L88.4 208.9L88.6 214.6ZM84.4 222.2L88.9 219.4L89.1 225.0ZM84.9 232.7L89.3 229.8L89.6 235.4ZM85.4 243.2L89.8 240.2L90.0 245.8ZM85.9 253.6L90.3 250.6L90.5 256.2ZM86.4 264.1L90.7 261.0L91.0 266.6ZM86.9 274.5L91.2 271.4L91.5 277.0ZM87.3 285.0L91.7 281.8L91.9 287.4ZM87.8 295.4L92.1 292.2L92.4 297.9ZM88.3 305.9L92.6 302.6L92.9 308.3ZM88.8 316.4L93.1 313.1L93.3 318.7ZM89.3 326.8L93.5 323.5L93.8 329.1ZM89.8 337.3L94.0 333.9L94.3 339.5ZM90.8 159.8L95.9 157.2L96.2 162.7ZM88.5 161.7L88.7 165.0L93.6 164.7ZM91.2 170.2L96.4 167.5L96.6 173.0ZM89.0 172.1L89.1 175.4L94.1 175.0ZM91.7 180.5L96.8 177.9L97.0 183.3ZM89.4 182.4L89.6 185.8L94.5 185.3ZM92.1 190.9L97.2 188.2L97.5 193.6ZM89.9 192.8L90.0 196.2L94.9 195.7ZM92.6 201.3L97.7 198.5L97.9 204.0ZM90.4 203.2L90.5 206.5L95.4 206.0ZM93.0 211.6L98.1 208.8L98.3 214.3ZM90.8 213.6L91.0 216.9L95.8 216.4ZM93.5 222.0L98.5 219.1L98.7 224.6ZM91.3 224.0L91.4 227.3L96.3 226.7ZM93.9 232.3L98.9 229.4L99.2 234.9ZM91.7 234.4L91.9 237.7L96.7 237.0ZM94.4 242.7L99.4 239.7L99.6 245.2ZM92.2 244.8L92.3 248.1L97.1 247.4ZM94.8 253.1L99.8 250.1L100.0 255.5ZM92.7 255.2L92.8 258.5L97.6 257.7ZM95.3 263.4L100.2 260.4L100.5 265.8ZM93.1 265.6L93.3 268.9L98.0 268.1ZM95.7 273.8L100.7 270.7L100.9 276.1ZM93.6 275.9L93.7 279.3L98.5 278.4ZM96.2 284.2L101.1 281.0L101.3 286.5ZM94.0 286.3L94.2 289.7L98.9 288.7ZM96.6 294.5L101.5 291.3L101.7 296.8ZM94.5 296.7L94.6 300.0L99.3 299.1ZM97.1 304.9L101.9 301.6L102.2 307.1ZM95.0 307.1L95.1 310.4L99.8 309.4ZM97.5 315.3L102.4 311.9L102.6 317.4ZM95.4 317.5L95.6 320.8L100.2 319.8ZM98.0 325.6L102.8 322.2L103.0 327.7ZM95.9 327.9L96.0 331.2L100.7 330.1ZM98.4 336.0L103.2 332.6L103.5 338.0ZM96.3 338.3L96.5 341.6L101.1 340.4ZM100.5 160.2L105.6 157.7L105.8 163.1ZM98.3 162.1L98.4 165.4L103.3 165.0ZM100.9 170.5L106.0 167.9L106.2 173.3ZM98.7 172.4L98.8 175.7L103.7 175.3ZM101.3 180.7L106.4 178.1L106.6 183.5ZM99.1 182.6L99.2 185.9L104.1 185.5ZM101.7 191.0L106.8 188.3L107.0 193.7ZM99.5 192.9L99.7 196.2L104.5 195.8ZM102.1 201.3L107.1 198.5L107.4 204.0ZM99.9 203.2L100.1 206.5L104.9 206.0ZM102.5 211.6L107.5 208.8L107.7 214.2ZM100.4 213.5L100.5 216.8L105.3 216.3ZM103.0 221.8L107.9 219.0L108.1 224.4ZM100.8 223.8L100.9 227.1L105.7 226.5ZM103.4 232.1L108.3 229.2L108.5 234.6ZM101.2 234.1L101.3 237.4L106.1 236.7ZM103.8 242.4L108.7 239.4L108.9 244.8ZM101.6 244.4L101.8 247.7L106.5 247.0ZM104.2 252.6L109.1 249.6L109.3 255.1ZM102.0 254.7L102.2 258.0L106.9 257.2ZM104.6 262.9L109.5 259.9L109.7 265.3ZM102.5 265.0L102.6 268.3L107.3 267.5ZM105.0 273.2L109.9 270.1L110.1 275.5ZM102.9 275.3L103.0 278.6L107.7 277.7ZM105.4 283.4L110.3 280.3L110.5 285.7ZM103.3 285.6L103.4 288.9L108.1 288.0ZM105.8 293.7L110.7 290.5L110.9 295.9ZM103.7 295.9L103.9 299.2L108.5 298.2ZM106.2 304.0L111.0 300.7L111.3 306.1ZM104.2 306.2L104.3 309.5L108.9 308.4ZM106.7 314.3L111.4 310.9L111.6 316.4ZM104.6 316.4L104.7 319.7L109.3 318.7ZM107.1 324.5L111.8 321.2L112.0 326.6ZM105.0 326.7L105.1 330.0L109.7 328.9ZM107.5 334.8L112.2 331.4L112.4 336.8ZM105.4 337.0L105.5 340.3L110.1 339.2ZM110.1 160.6L115.1 158.1L115.3 163.5ZM107.9 162.5L108.0 165.7L112.8 165.4ZM110.4 170.8L115.4 168.2L115.6 173.6ZM108.2 172.7L108.4 175.9L113.1 175.5ZM110.8 181.0L115.8 178.4L116.0 183.7ZM108.6 182.9L108.7 186.1L113.5 185.7ZM111.2 191.1L116.1 188.5L116.3 193.8ZM109.0 193.1L109.1 196.3L113.9 195.8ZM111.5 201.3L116.5 198.6L116.7 204.0ZM109.4 203.2L109.5 206.5L114.2 206.0ZM111.9 211.5L116.8 208.7L117.0 214.1ZM109.8 213.4L109.9 216.7L114.6 216.1ZM112.3 221.7L117.2 218.9L117.4 224.2ZM110.1 223.6L110.3 226.9L115.0 226.3ZM112.7 231.8L117.5 229.0L117.7 234.3ZM110.5 233.8L110.7 237.1L115.3 236.4ZM113.0 242.0L117.9 239.1L118.1 244.5ZM110.9 244.0L111.0 247.3L115.7 246.6ZM113.4 252.2L118.2 249.2L118.4 254.6ZM111.3 254.2L111.4 257.5L116.0 256.7ZM113.8 262.4L118.6 259.3L118.8 264.7ZM111.7 264.4L111.8 267.7L116.4 266.9ZM114.2 272.5L118.9 269.5L119.1 274.8ZM112.1 274.6L112.2 277.9L116.8 277.0ZM114.5 282.7L119.3 279.6L119.5 285.0ZM112.4 284.8L112.6 288.1L117.1 287.2ZM114.9 292.9L119.6 289.7L119.8 295.1ZM112.8 295.0L112.9 298.3L117.5 297.3ZM115.3 303.1L120.0 299.8L120.2 305.2ZM113.2 305.2L113.3 308.5L117.8 307.5ZM115.6 313.2L120.3 310.0L120.5 315.3ZM113.6 315.4L113.7 318.7L118.2 317.6ZM116.0 323.4L120.7 320.1L120.9 325.5ZM114.0 325.6L114.1 328.9L118.6 327.8ZM116.4 333.6L121.1 330.2L121.2 335.6ZM114.3 335.8L114.5 339.1L118.9 337.9ZM119.5 161.0L124.4 158.5L124.6 163.9ZM117.3 162.8L117.4 166.1L122.1 165.8ZM119.8 171.1L124.7 168.6L124.9 173.9ZM117.6 173.0L117.8 176.2L122.5 175.8ZM120.1 181.2L125.0 178.6L125.2 183.9ZM118.0 183.1L118.1 186.3L122.8 185.9ZM120.5 191.3L125.4 188.6L125.5 193.9ZM118.3 193.2L118.4 196.4L123.1 195.9ZM120.8 201.4L125.7 198.7L125.8 204.0ZM118.7 203.3L118.8 206.5L123.4 206.0ZM121.1 211.4L126.0 208.7L126.1 214.0ZM119.0 213.4L119.1 216.6L123.8 216.0ZM121.5 221.5L126.3 218.7L126.5 224.0ZM119.4 223.5L119.5 226.7L124.1 226.1ZM121.8 231.6L126.6 228.8L126.8 234.1ZM119.7 233.6L119.8 236.8L124.4 236.2ZM122.1 241.7L126.9 238.8L127.1 244.1ZM120.0 243.7L120.2 246.9L124.7 246.2ZM122.5 251.8L127.2 248.8L127.4 254.1ZM120.4 253.8L120.5 257.0L125.0 256.3ZM122.8 261.8L127.5 258.9L127.7 264.2ZM120.7 263.9L120.8 267.1L125.4 266.3ZM123.1 271.9L127.9 268.9L128.0 274.2ZM121.1 274.0L121.2 277.2L125.7 276.4ZM123.5 282.0L128.2 278.9L128.3 284.2ZM121.4 284.1L121.5 287.3L126.0 286.4ZM123.8 292.1L128.5 288.9L128.7 294.3ZM121.8 294.2L121.9 297.4L126.3 296.5ZM124.1 302.2L128.8 299.0L129.0 304.3ZM122.1 304.3L122.2 307.5L126.7 306.6ZM124.5 312.3L129.1 309.0L129.3 314.3ZM122.4 314.4L122.6 317.6L127.0 316.6ZM124.8 322.3L129.4 319.0L129.6 324.4ZM122.8 324.5L122.9 327.7L127.3 326.7ZM125.1 332.4L129.7 329.1L129.9 334.4ZM123.1 334.6L123.2 337.8L127.6 336.7ZM128.7 161.4L133.6 159.0L133.7 164.2ZM126.6 163.2L126.7 166.4L131.3 166.1ZM129.0 171.4L133.9 168.9L134.0 174.2ZM126.9 173.2L127.0 176.4L131.6 176.1ZM129.3 181.4L134.1 178.8L134.3 184.1ZM127.2 183.3L127.3 186.5L131.9 186.0ZM129.6 191.4L134.4 188.8L134.6 194.0ZM127.5 193.3L127.6 196.5L132.2 196.0ZM129.9 201.4L134.7 198.7L134.8 204.0ZM127.8 203.3L127.9 206.5L132.5 206.0ZM130.2 211.4L135.0 208.7L135.1 213.9ZM128.1 213.3L128.2 216.5L132.8 215.9ZM130.5 221.4L135.3 218.6L135.4 223.9ZM128.4 223.3L128.5 226.5L133.0 225.9ZM130.8 231.4L135.5 228.5L135.7 233.8ZM128.7 233.3L128.8 236.5L133.3 235.9ZM131.1 241.3L135.8 238.5L136.0 243.8ZM129.0 243.3L129.1 246.5L133.6 245.8ZM131.4 251.3L136.1 248.4L136.2 253.7ZM129.3 253.3L129.4 256.5L133.9 255.8ZM131.7 261.3L136.4 258.4L136.5 263.6ZM129.6 263.3L129.7 266.6L134.2 265.8ZM132.0 271.3L136.6 268.3L136.8 273.6ZM129.9 273.4L130.0 276.6L134.5 275.7ZM132.3 281.3L136.9 278.2L137.1 283.5ZM130.2 283.4L130.3 286.6L134.8 285.7ZM132.6 291.3L137.2 288.2L137.3 293.5ZM130.6 293.4L130.7 296.6L135.1 295.7ZM132.9 301.3L137.5 298.1L137.6 303.4ZM130.9 303.4L131.0 306.6L135.3 305.6ZM133.2 311.3L137.7 308.1L137.9 313.3ZM131.2 313.4L131.3 316.6L135.6 315.6ZM133.5 321.3L138.0 318.0L138.2 323.3ZM131.5 323.4L131.6 326.6L135.9 325.6ZM133.8 331.3L138.3 328.0L138.4 333.2ZM131.8 333.4L131.9 336.6L136.2 335.5ZM137.8 161.8L142.6 159.4L142.8 164.6ZM135.7 163.6L135.8 166.8L140.4 166.5ZM138.1 171.7L142.9 169.2L143.0 174.4ZM136.0 173.5L136.1 176.7L140.6 176.3ZM138.3 181.6L143.1 179.1L143.2 184.3ZM136.3 183.5L136.3 186.6L140.9 186.2ZM138.6 191.5L143.3 188.9L143.5 194.1ZM136.5 193.4L136.6 196.5L141.1 196.1ZM138.9 201.4L143.6 198.8L143.7 204.0ZM136.8 203.3L136.9 206.5L141.4 206.0ZM139.1 211.3L143.8 208.6L144.0 213.8ZM137.1 213.2L137.1 216.4L141.6 215.8ZM139.4 221.2L144.1 218.5L144.2 223.7ZM137.3 223.1L137.4 226.3L141.9 225.7ZM139.6 231.1L144.3 228.3L144.4 233.5ZM137.6 233.1L137.7 236.2L142.1 235.6ZM139.9 241.0L144.5 238.2L144.7 243.4ZM137.9 243.0L137.9 246.2L142.4 245.5ZM140.2 250.9L144.8 248.0L144.9 253.3ZM138.1 252.9L138.2 256.1L142.6 255.3ZM140.4 260.8L145.0 257.9L145.2 263.1ZM138.4 262.8L138.5 266.0L142.9 265.2ZM140.7 270.7L145.3 267.7L145.4 273.0ZM138.7 272.7L138.8 275.9L143.1 275.1ZM140.9 280.6L145.5 277.6L145.6 282.8ZM138.9 282.7L139.0 285.8L143.4 285.0ZM141.2 290.5L145.7 287.4L145.9 292.7ZM139.2 292.6L139.3 295.8L143.6 294.9ZM141.5 300.4L146.0 297.3L146.1 302.5ZM139.5 302.5L139.6 305.7L143.9 304.7ZM141.7 310.3L146.2 307.1L146.4 312.4ZM139.7 312.4L139.8 315.6L144.1 314.6ZM142.0 320.2L146.5 317.0L146.6 322.2ZM140.0 322.3L140.1 325.5L144.4 324.5ZM142.2 330.1L146.7 326.8L146.8 332.1ZM140.3 332.3L140.4 335.4L144.6 334.4ZM146.8 162.2L151.5 159.8L151.6 164.9ZM144.7 164.0L144.8 167.1L149.3 166.8ZM147.0 172.0L151.7 169.5L151.8 174.7ZM144.9 173.8L145.0 177.0L149.5 176.6ZM147.2 181.8L151.9 179.3L152.0 184.5ZM145.2 183.6L145.2 186.8L149.7 186.4ZM147.5 191.6L152.1 189.1L152.2 194.2ZM145.4 193.5L145.5 196.6L149.9 196.2ZM147.7 201.4L152.3 198.8L152.4 204.0ZM145.6 203.3L145.7 206.5L150.1 206.0ZM147.9 211.3L152.5 208.6L152.6 213.8ZM145.9 213.1L145.9 216.3L150.3 215.7ZM148.1 221.1L152.7 218.4L152.8 223.5ZM146.1 223.0L146.2 226.1L150.6 225.5ZM148.3 230.9L152.9 228.1L153.1 233.3ZM146.3 232.8L146.4 236.0L150.8 235.3ZM148.6 240.7L153.1 237.9L153.3 243.1ZM146.6 242.6L146.6 245.8L151.0 245.1ZM148.8 250.5L153.4 247.6L153.5 252.8ZM146.8 252.5L146.9 255.6L151.2 254.9ZM149.0 260.3L153.6 257.4L153.7 262.6ZM147.0 262.3L147.1 265.4L151.4 264.7ZM149.2 270.1L153.8 267.2L153.9 272.3ZM147.3 272.1L147.3 275.3L151.6 274.5ZM149.5 279.9L154.0 276.9L154.1 282.1ZM147.5 282.0L147.6 285.1L151.8 284.3ZM149.7 289.7L154.2 286.7L154.3 291.9ZM147.7 291.8L147.8 294.9L152.1 294.0ZM149.9 299.6L154.4 296.5L154.5 301.6ZM147.9 301.6L148.0 304.8L152.3 303.8ZM150.1 309.4L154.6 306.2L154.7 311.4ZM148.2 311.5L148.3 314.6L152.5 313.6ZM150.4 319.2L154.8 316.0L154.9 321.2ZM148.4 321.3L148.5 324.4L152.7 323.4ZM150.6 329.0L155.0 325.8L155.1 330.9ZM148.6 331.1L148.7 334.3L152.9 333.2ZM155.6 162.6L160.3 160.2L160.3 165.3ZM153.5 164.3L153.6 167.5L158.0 167.1ZM155.8 172.3L160.4 169.8L160.5 175.0ZM153.7 174.1L153.8 177.2L158.2 176.8ZM156.0 182.0L160.6 179.5L160.7 184.7ZM153.9 183.8L154.0 187.0L158.4 186.5ZM156.2 191.8L160.8 189.2L160.9 194.3ZM154.1 193.6L154.2 196.7L158.6 196.2ZM156.3 201.5L160.9 198.9L161.0 204.0ZM154.3 203.3L154.4 206.4L158.7 205.9ZM156.5 211.2L161.1 208.6L161.2 213.7ZM154.5 213.1L154.6 216.2L158.9 215.6ZM156.7 220.9L161.3 218.2L161.4 223.4ZM154.7 222.8L154.8 225.9L159.1 225.4ZM156.9 230.7L161.4 227.9L161.5 233.0ZM154.9 232.6L155.0 235.7L159.3 235.1ZM157.1 240.4L161.6 237.6L161.7 242.7ZM155.1 242.3L155.2 245.4L159.5 244.8ZM157.3 250.1L161.8 247.3L161.9 252.4ZM155.3 252.0L155.4 255.2L159.6 254.5ZM157.5 259.8L161.9 256.9L162.0 262.1ZM155.5 261.8L155.6 264.9L159.8 264.2ZM157.7 269.5L162.1 266.6L162.2 271.8ZM155.7 271.5L155.8 274.7L160.0 273.9ZM157.8 279.3L162.3 276.3L162.4 281.4ZM155.9 281.3L156.0 284.4L160.2 283.6ZM158.0 289.0L162.4 286.0L162.5 291.1ZM156.1 291.0L156.1 294.1L160.3 293.3ZM158.2 298.7L162.6 295.7L162.7 300.8ZM156.3 300.8L156.3 303.9L160.5 303.0ZM158.4 308.4L162.8 305.3L162.9 310.5ZM156.5 310.5L156.5 313.6L160.7 312.7ZM158.6 318.2L163.0 315.0L163.0 320.1ZM156.7 320.3L156.7 323.4L160.9 322.4ZM158.8 327.9L163.1 324.7L163.2 329.8ZM156.9 330.0L156.9 333.1L161.1 332.1ZM164.3 163.0L168.9 160.6L168.9 165.6ZM162.2 164.7L162.3 167.8L166.6 167.5ZM164.4 172.6L169.0 170.2L169.1 175.2ZM162.4 174.4L162.4 177.5L166.8 177.1ZM164.6 182.2L169.1 179.7L169.2 184.8ZM162.6 184.0L162.6 187.1L166.9 186.7ZM164.7 191.9L169.3 189.3L169.3 194.4ZM162.7 193.7L162.8 196.8L167.1 196.3ZM164.9 201.5L169.4 198.9L169.5 204.0ZM162.9 203.3L162.9 206.4L167.2 205.9ZM165.0 211.1L169.5 208.5L169.6 213.6ZM163.0 213.0L163.1 216.1L167.4 215.6ZM165.2 220.8L169.7 218.1L169.7 223.2ZM163.2 222.7L163.2 225.7L167.5 225.2ZM165.3 230.4L169.8 227.7L169.9 232.8ZM163.4 232.3L163.4 235.4L167.6 234.8ZM165.5 240.1L169.9 237.3L170.0 242.4ZM163.5 242.0L163.6 245.1L167.8 244.4ZM165.6 249.7L170.1 246.9L170.1 252.0ZM163.7 251.6L163.7 254.7L167.9 254.0ZM165.8 259.3L170.2 256.5L170.3 261.6ZM163.8 261.3L163.9 264.4L168.1 263.6ZM165.9 269.0L170.3 266.1L170.4 271.2ZM164.0 270.9L164.1 274.0L168.2 273.2ZM166.1 278.6L170.5 275.7L170.5 280.8ZM164.2 280.6L164.2 283.7L168.4 282.9ZM166.2 288.3L170.6 285.3L170.7 290.4ZM164.3 290.3L164.4 293.4L168.5 292.5ZM166.4 297.9L170.7 294.9L170.8 299.9ZM164.5 299.9L164.5 303.0L168.6 302.1ZM166.5 307.5L170.9 304.5L170.9 309.5ZM164.6 309.6L164.7 312.7L168.8 311.7ZM166.7 317.2L171.0 314.0L171.1 319.1ZM164.8 319.2L164.9 322.3L168.9 321.3ZM166.9 326.8L171.1 323.6L171.2 328.7ZM165.0 328.9L165.0 332.0L169.1 330.9ZM172.8 163.3L177.3 161.0L177.4 166.0ZM170.8 165.1L170.8 168.1L175.1 167.8ZM172.9 172.9L177.4 170.5L177.5 175.5ZM170.9 174.6L171.0 177.7L175.2 177.3ZM173.0 182.4L177.5 180.0L177.6 185.0ZM171.0 184.2L171.1 187.3L175.3 186.9ZM173.1 192.0L177.6 189.5L177.7 194.5ZM171.2 193.8L171.2 196.8L175.4 196.4ZM173.3 201.5L177.7 199.0L177.8 204.0ZM171.3 203.3L171.3 206.4L175.6 205.9ZM173.4 211.1L177.8 208.5L177.9 213.5ZM171.4 212.9L171.5 216.0L175.7 215.5ZM173.5 220.6L177.9 218.0L178.0 223.0ZM171.5 222.5L171.6 225.6L175.8 225.0ZM173.6 230.2L178.0 227.5L178.1 232.6ZM171.7 232.1L171.7 235.1L175.9 234.5ZM173.7 239.8L178.1 237.0L178.2 242.1ZM171.8 241.6L171.8 244.7L176.0 244.1ZM173.8 249.3L178.2 246.5L178.3 251.6ZM171.9 251.2L172.0 254.3L176.1 253.6ZM174.0 258.9L178.3 256.0L178.4 261.1ZM172.0 260.8L172.1 263.9L176.2 263.1ZM174.1 268.4L178.4 265.5L178.5 270.6ZM172.2 270.4L172.2 273.4L176.3 272.6ZM174.2 278.0L178.5 275.1L178.6 280.1ZM172.3 279.9L172.3 283.0L176.4 282.2ZM174.3 287.5L178.6 284.6L178.7 289.6ZM172.4 289.5L172.5 292.6L176.5 291.7ZM174.4 297.1L178.7 294.1L178.8 299.1ZM172.5 299.1L172.6 302.2L176.6 301.2ZM174.6 306.6L178.8 303.6L178.9 308.6ZM172.7 308.7L172.7 311.7L176.7 310.8ZM174.7 316.2L178.9 313.1L179.0 318.1ZM172.8 318.2L172.8 321.3L176.9 320.3ZM174.8 325.7L179.0 322.6L179.1 327.6ZM172.9 327.8L173.0 330.9L177.0 329.8ZM181.2 163.7L185.6 161.3L185.7 166.3ZM179.2 165.4L179.2 168.4L183.5 168.1ZM181.3 173.2L185.7 170.8L185.7 175.8ZM179.3 174.9L179.3 177.9L183.5 177.6ZM181.3 182.6L185.8 180.2L185.8 185.2ZM179.4 184.4L179.4 187.4L183.6 187.0ZM181.4 192.1L185.8 189.6L185.9 194.6ZM179.5 193.9L179.5 196.9L183.7 196.5ZM181.5 201.6L185.9 199.0L185.9 204.0ZM179.6 203.4L179.6 206.4L183.7 205.9ZM181.6 211.0L186.0 208.5L186.0 213.5ZM179.7 212.9L179.7 215.9L183.8 215.4ZM181.7 220.5L186.0 217.9L186.1 222.9ZM179.8 222.3L179.8 225.4L183.9 224.8ZM181.8 230.0L186.1 227.3L186.1 232.3ZM179.8 231.8L179.9 234.9L184.0 234.3ZM181.8 239.5L186.2 236.7L186.2 241.7ZM179.9 241.3L180.0 244.4L184.0 243.7ZM181.9 248.9L186.2 246.2L186.3 251.2ZM180.0 250.8L180.1 253.9L184.1 253.2ZM182.0 258.4L186.3 255.6L186.3 260.6ZM180.1 260.3L180.1 263.3L184.2 262.6ZM182.1 267.9L186.4 265.0L186.4 270.0ZM180.2 269.8L180.2 272.8L184.3 272.1ZM182.2 277.3L186.4 274.4L186.5 279.4ZM180.3 279.3L180.3 282.3L184.3 281.5ZM182.3 286.8L186.5 283.9L186.5 288.9ZM180.4 288.8L180.4 291.8L184.4 291.0ZM182.3 296.3L186.6 293.3L186.6 298.3ZM180.5 298.3L180.5 301.3L184.5 300.4ZM182.4 305.7L186.6 302.7L186.7 307.7ZM180.6 307.8L180.6 310.8L184.6 309.9ZM182.5 315.2L186.7 312.2L186.7 317.2ZM180.7 317.3L180.7 320.3L184.6 319.3ZM182.6 324.7L186.8 321.6L186.8 326.6ZM180.8 326.7L180.8 329.8L184.7 328.8ZM189.4 164.0L193.8 161.7L193.8 166.7ZM187.5 165.7L187.5 168.8L191.6 168.4ZM189.5 173.4L193.9 171.1L193.9 176.0ZM187.5 175.2L187.6 178.2L191.7 177.8ZM189.5 182.8L193.9 180.4L193.9 185.4ZM187.6 184.6L187.6 187.6L191.7 187.2ZM189.6 192.2L193.9 189.7L193.9 194.7ZM187.7 194.0L187.7 197.0L191.8 196.5ZM189.6 201.6L194.0 199.1L194.0 204.0ZM187.7 203.4L187.7 206.4L191.8 205.9ZM189.7 211.0L194.0 208.4L194.0 213.4ZM187.8 212.8L187.8 215.8L191.9 215.3ZM189.7 220.4L194.0 217.8L194.0 222.7ZM187.8 222.2L187.8 225.2L191.9 224.6ZM189.8 229.8L194.1 227.1L194.1 232.1ZM187.9 231.6L187.9 234.6L191.9 234.0ZM189.8 239.2L194.1 236.5L194.1 241.4ZM187.9 241.0L188.0 244.0L192.0 243.4ZM189.9 248.5L194.1 245.8L194.1 250.8ZM188.0 250.4L188.0 253.4L192.0 252.7ZM189.9 257.9L194.1 255.2L194.2 260.1ZM188.1 259.8L188.1 262.8L192.1 262.1ZM190.0 267.3L194.2 264.5L194.2 269.5ZM188.1 269.2L188.1 272.2L192.1 271.5ZM190.0 276.7L194.2 273.9L194.2 278.8ZM188.2 278.6L188.2 281.7L192.1 280.9ZM190.1 286.1L194.2 283.2L194.3 288.2ZM188.2 288.1L188.2 291.1L192.2 290.2ZM190.1 295.5L194.3 292.5L194.3 297.5ZM188.3 297.5L188.3 300.5L192.2 299.6ZM190.2 304.9L194.3 301.9L194.3 306.8ZM188.3 306.9L188.4 309.9L192.3 309.0ZM190.2 314.3L194.3 311.2L194.4 316.2ZM188.4 316.3L188.4 319.3L192.3 318.3ZM190.3 323.7L194.4 320.6L194.4 325.5ZM188.5 325.7L188.5 328.7L192.3 327.7ZM197.5 164.4L201.9 162.1L201.9 167.0ZM195.6 166.1L195.6 169.1L199.7 168.8ZM197.6 173.7L201.9 171.3L201.9 176.3ZM195.6 175.4L195.7 178.4L199.7 178.0ZM197.6 183.0L201.9 180.6L201.9 185.5ZM195.7 184.7L195.7 187.7L199.7 187.3ZM197.6 192.3L201.9 189.9L201.9 194.8ZM195.7 194.1L195.7 197.0L199.7 196.6ZM197.6 201.6L201.9 199.1L201.9 204.0ZM195.7 203.4L195.7 206.4L199.7 205.9ZM197.6 210.9L201.9 208.4L201.9 213.3ZM195.7 212.7L195.8 215.7L199.8 215.2ZM197.6 220.2L201.9 217.7L201.9 222.6ZM195.8 222.0L195.8 225.0L199.8 224.5ZM197.7 229.6L201.9 226.9L201.9 231.8ZM195.8 231.4L195.8 234.4L199.8 233.8ZM197.7 238.9L201.9 236.2L201.9 241.1ZM195.8 240.7L195.8 243.7L199.8 243.1ZM197.7 248.2L201.9 245.5L201.9 250.4ZM195.8 250.0L195.9 253.0L199.8 252.3ZM197.7 257.5L201.9 254.7L201.9 259.6ZM195.9 259.4L195.9 262.3L199.8 261.6ZM197.7 266.8L201.9 264.0L201.9 268.9ZM195.9 268.7L195.9 271.7L199.8 270.9ZM197.7 276.1L201.9 273.3L201.9 278.2ZM195.9 278.0L195.9 281.0L199.8 280.2ZM197.8 285.4L201.9 282.5L201.9 287.4ZM195.9 287.3L196.0 290.3L199.8 289.5ZM197.8 294.7L201.9 291.8L201.9 296.7ZM196.0 296.7L196.0 299.7L199.8 298.8ZM197.8 304.0L201.9 301.1L201.9 306.0ZM196.0 306.0L196.0 309.0L199.8 308.1ZM197.8 313.3L201.9 310.3L201.9 315.2ZM196.0 315.3L196.0 318.3L199.8 317.4ZM197.8 322.6L201.9 319.6L201.9 324.5ZM196.0 324.7L196.0 327.6L199.9 326.6ZM205.5 164.7L209.8 162.4L209.8 167.3ZM203.6 166.4L203.6 169.4L207.6 169.1ZM205.5 174.0L209.8 171.6L209.7 176.5ZM203.6 175.7L203.6 178.6L207.6 178.3ZM205.5 183.2L209.7 180.8L209.7 185.7ZM203.6 184.9L203.6 187.9L207.6 187.5ZM205.5 192.4L209.7 190.0L209.7 194.9ZM203.6 194.2L203.6 197.1L207.6 196.7ZM205.5 201.7L209.7 199.2L209.7 204.1ZM203.6 203.4L203.6 206.4L207.6 205.9ZM205.4 210.9L209.6 208.4L209.6 213.2ZM203.6 212.7L203.6 215.6L207.5 215.1ZM205.4 220.1L209.6 217.6L209.6 222.4ZM203.6 221.9L203.6 224.9L207.5 224.3ZM205.4 229.3L209.6 226.7L209.6 231.6ZM203.6 231.1L203.6 234.1L207.5 233.5ZM205.4 238.6L209.5 235.9L209.5 240.8ZM203.6 240.4L203.6 243.4L207.5 242.7ZM205.4 247.8L209.5 245.1L209.5 250.0ZM203.6 249.6L203.6 252.6L207.4 251.9ZM205.4 257.0L209.5 254.3L209.5 259.2ZM203.6 258.9L203.5 261.9L207.4 261.1ZM205.4 266.3L209.4 263.5L209.4 268.4ZM203.5 268.1L203.5 271.1L207.4 270.4ZM205.3 275.5L209.4 272.7L209.4 277.6ZM203.5 277.4L203.5 280.4L207.4 279.6ZM205.3 284.7L209.4 281.9L209.4 286.7ZM203.5 286.6L203.5 289.6L207.3 288.8ZM205.3 294.0L209.3 291.1L209.3 295.9ZM203.5 295.9L203.5 298.8L207.3 298.0ZM205.3 303.2L209.3 300.2L209.3 305.1ZM203.5 305.1L203.5 308.1L207.3 307.2ZM205.3 312.4L209.3 309.4L209.3 314.3ZM203.5 314.4L203.5 317.3L207.3 316.4ZM205.3 321.6L209.2 318.6L209.2 323.5ZM203.5 323.6L203.5 326.6L207.2 325.6ZM213.4 165.1L217.6 162.8L217.6 167.6ZM211.5 166.7L211.5 169.7L215.4 169.4ZM213.3 174.2L217.5 171.9L217.5 176.7ZM211.5 175.9L211.5 178.8L215.4 178.5ZM213.3 183.4L217.5 181.0L217.4 185.8ZM211.4 185.1L211.4 188.0L215.3 187.6ZM213.2 192.5L217.4 190.1L217.4 195.0ZM211.4 194.2L211.4 197.2L215.3 196.8ZM213.2 201.7L217.3 199.2L217.3 204.1ZM211.3 203.4L211.3 206.3L215.2 205.9ZM213.1 210.8L217.3 208.3L217.2 213.2ZM211.3 212.6L211.3 215.5L215.2 215.0ZM213.1 220.0L217.2 217.5L217.2 222.3ZM211.3 221.8L211.3 224.7L215.1 224.1ZM213.0 229.1L217.1 226.6L217.1 231.4ZM211.2 230.9L211.2 233.9L215.1 233.3ZM213.0 238.3L217.1 235.7L217.0 240.5ZM211.2 240.1L211.2 243.0L215.0 242.4ZM213.0 247.4L217.0 244.8L217.0 249.6ZM211.1 249.3L211.1 252.2L214.9 251.5ZM212.9 256.6L216.9 253.9L216.9 258.7ZM211.1 258.4L211.1 261.4L214.9 260.7ZM212.9 265.7L216.9 263.0L216.9 267.8ZM211.1 267.6L211.1 270.5L214.8 269.8ZM212.8 274.9L216.8 272.1L216.8 276.9ZM211.0 276.8L211.0 279.7L214.8 278.9ZM212.8 284.0L216.8 281.2L216.7 286.1ZM211.0 286.0L211.0 288.9L214.7 288.1ZM212.7 293.2L216.7 290.3L216.7 295.2ZM210.9 295.1L210.9 298.1L214.7 297.2ZM212.7 302.4L216.6 299.5L216.6 304.3ZM210.9 304.3L210.9 307.2L214.6 306.3ZM212.6 311.5L216.6 308.6L216.5 313.4ZM210.9 313.5L210.9 316.4L214.6 315.5ZM212.6 320.7L216.5 317.7L216.5 322.5ZM210.8 322.6L210.8 325.6L214.5 324.6ZM221.1 165.4L225.3 163.1L225.2 167.9ZM219.3 167.1L219.2 170.0L223.1 169.7ZM221.0 174.5L225.2 172.2L225.1 177.0ZM219.2 176.1L219.2 179.1L223.0 178.7ZM220.9 183.6L225.1 181.2L225.0 186.0ZM219.1 185.2L219.1 188.2L223.0 187.8ZM220.9 192.6L225.0 190.2L224.9 195.0ZM219.0 194.3L219.0 197.2L222.9 196.8ZM220.8 201.7L224.9 199.3L224.8 204.1ZM219.0 203.4L218.9 206.3L222.8 205.9ZM220.7 210.8L224.8 208.3L224.7 213.1ZM218.9 212.5L218.9 215.4L222.7 214.9ZM220.6 219.9L224.7 217.4L224.6 222.1ZM218.8 221.6L218.8 224.5L222.6 224.0ZM220.6 228.9L224.6 226.4L224.5 231.2ZM218.8 230.7L218.7 233.6L222.5 233.0ZM220.5 238.0L224.5 235.4L224.4 240.2ZM218.7 239.8L218.7 242.7L222.4 242.1ZM220.4 247.1L224.4 244.5L224.3 249.2ZM218.6 248.9L218.6 251.8L222.3 251.2ZM220.3 256.2L224.3 253.5L224.3 258.3ZM218.5 258.0L218.5 260.9L222.3 260.2ZM220.2 265.2L224.2 262.5L224.2 267.3ZM218.5 267.1L218.4 270.0L222.2 269.3ZM220.2 274.3L224.1 271.6L224.1 276.3ZM218.4 276.2L218.4 279.1L222.1 278.3ZM220.1 283.4L224.0 280.6L224.0 285.4ZM218.3 285.3L218.3 288.2L222.0 287.4ZM220.0 292.5L223.9 289.6L223.9 294.4ZM218.3 294.4L218.2 297.3L221.9 296.4ZM219.9 301.5L223.8 298.7L223.8 303.5ZM218.2 303.5L218.2 306.4L221.8 305.5ZM219.8 310.6L223.7 307.7L223.7 312.5ZM218.1 312.6L218.1 315.5L221.7 314.5ZM219.8 319.7L223.6 316.7L223.6 321.5ZM218.0 321.6L218.0 324.6L221.6 323.6ZM228.7 165.7L232.8 163.5L232.7 168.2ZM226.9 167.4L226.8 170.3L230.7 169.9ZM228.6 174.7L232.7 172.4L232.6 177.2ZM226.8 176.4L226.7 179.3L230.6 178.9ZM228.5 183.7L232.5 181.4L232.5 186.2ZM226.7 185.4L226.6 188.3L230.4 187.9ZM228.4 192.7L232.4 190.4L232.4 195.1ZM226.6 194.4L226.5 197.3L230.3 196.9ZM228.3 201.7L232.3 199.3L232.2 204.1ZM226.5 203.4L226.4 206.3L230.2 205.9ZM228.2 210.7L232.2 208.3L232.1 213.0ZM226.4 212.5L226.3 215.3L230.1 214.9ZM228.0 219.7L232.0 217.2L232.0 222.0ZM226.3 221.5L226.2 224.4L230.0 223.8ZM227.9 228.7L231.9 226.2L231.8 231.0ZM226.2 230.5L226.1 233.4L229.9 232.8ZM227.8 237.7L231.8 235.2L231.7 239.9ZM226.1 239.5L226.0 242.4L229.7 241.8ZM227.7 246.7L231.7 244.1L231.6 248.9ZM226.0 248.5L225.9 251.4L229.6 250.8ZM227.6 255.7L231.5 253.1L231.5 257.8ZM225.9 257.5L225.8 260.4L229.5 259.8ZM227.5 264.7L231.4 262.0L231.3 266.8ZM225.8 266.6L225.7 269.5L229.4 268.7ZM227.4 273.7L231.3 271.0L231.2 275.8ZM225.7 275.6L225.6 278.5L229.3 277.7ZM227.3 282.7L231.2 280.0L231.1 284.7ZM225.6 284.6L225.5 287.5L229.1 286.7ZM227.2 291.7L231.0 288.9L231.0 293.7ZM225.4 293.6L225.4 296.5L229.0 295.7ZM227.1 300.7L230.9 297.9L230.8 302.6ZM225.3 302.6L225.3 305.5L228.9 304.7ZM227.0 309.7L230.8 306.8L230.7 311.6ZM225.2 311.7L225.2 314.5L228.8 313.6ZM226.8 318.7L230.7 315.8L230.6 320.6ZM225.1 320.7L225.1 323.6L228.7 322.6ZM236.2 166.1L240.2 163.8L240.1 168.5ZM234.4 167.7L234.3 170.5L238.1 170.2ZM236.0 175.0L240.1 172.7L240.0 177.4ZM234.2 176.6L234.2 179.5L238.0 179.1ZM235.9 183.9L239.9 181.6L239.8 186.3ZM234.1 185.6L234.1 188.4L237.8 188.0ZM235.8 192.8L239.7 190.5L239.7 195.2ZM234.0 194.5L233.9 197.4L237.7 197.0ZM235.6 201.8L239.6 199.4L239.5 204.1ZM233.8 203.5L233.8 206.3L237.5 205.9ZM235.5 210.7L239.4 208.3L239.4 213.0ZM233.7 212.4L233.7 215.3L237.4 214.8ZM235.3 219.6L239.3 217.1L239.2 221.9ZM233.6 221.3L233.5 224.2L237.2 223.7ZM235.2 228.5L239.1 226.0L239.0 230.7ZM233.4 230.3L233.4 233.1L237.1 232.6ZM235.1 237.5L239.0 234.9L238.9 239.6ZM233.3 239.2L233.3 242.1L236.9 241.5ZM234.9 246.4L238.8 243.8L238.7 248.5ZM233.2 248.2L233.1 251.0L236.8 250.4ZM234.8 255.3L238.7 252.7L238.6 257.4ZM233.1 257.1L233.0 260.0L236.6 259.3ZM234.6 264.2L238.5 261.6L238.4 266.3ZM232.9 266.1L232.9 268.9L236.5 268.2ZM234.5 273.2L238.3 270.5L238.3 275.2ZM232.8 275.0L232.7 277.9L236.3 277.1ZM234.4 282.1L238.2 279.4L238.1 284.1ZM232.7 283.9L232.6 286.8L236.2 286.0ZM234.2 291.0L238.0 288.2L237.9 293.0ZM232.5 292.9L232.5 295.8L236.0 294.9ZM234.1 299.9L237.9 297.1L237.8 301.8ZM232.4 301.8L232.3 304.7L235.9 303.8ZM233.9 308.9L237.7 306.0L237.6 310.7ZM232.3 310.8L232.2 313.6L235.7 312.7ZM233.8 317.8L237.6 314.9L237.5 319.6ZM232.1 319.7L232.1 322.6L235.6 321.6ZM243.5 166.4L247.5 164.2L247.4 168.8ZM241.8 168.0L241.7 170.8L245.4 170.5ZM243.4 175.2L247.3 173.0L247.2 177.6ZM241.6 176.9L241.5 179.7L245.2 179.4ZM243.2 184.1L247.1 181.8L247.0 186.5ZM241.4 185.7L241.4 188.6L245.1 188.2ZM243.0 192.9L247.0 190.6L246.9 195.3ZM241.3 194.6L241.2 197.4L244.9 197.0ZM242.9 201.8L246.8 199.4L246.7 204.1ZM241.1 203.5L241.1 206.3L244.7 205.9ZM242.7 210.6L246.6 208.2L246.5 212.9ZM240.9 212.3L240.9 215.2L244.5 214.7ZM242.5 219.5L246.4 217.0L246.3 221.7ZM240.8 221.2L240.7 224.0L244.3 223.5ZM242.3 228.3L246.2 225.9L246.1 230.5ZM240.6 230.1L240.6 232.9L244.2 232.4ZM242.2 237.2L246.0 234.7L245.9 239.3ZM240.5 238.9L240.4 241.8L244.0 241.2ZM242.0 246.1L245.8 243.5L245.7 248.2ZM240.3 247.8L240.2 250.7L243.8 250.0ZM241.8 254.9L245.7 252.3L245.6 257.0ZM240.1 256.7L240.1 259.5L243.6 258.9ZM241.7 263.8L245.5 261.1L245.4 265.8ZM240.0 265.6L239.9 268.4L243.5 267.7ZM241.5 272.6L245.3 269.9L245.2 274.6ZM239.8 274.4L239.8 277.3L243.3 276.5ZM241.3 281.5L245.1 278.8L245.0 283.4ZM239.6 283.3L239.6 286.1L243.1 285.4ZM241.2 290.3L244.9 287.6L244.8 292.2ZM239.5 292.2L239.4 295.0L242.9 294.2ZM241.0 299.2L244.7 296.4L244.6 301.1ZM239.3 301.0L239.3 303.9L242.7 303.0ZM240.8 308.0L244.5 305.2L244.4 309.9ZM239.2 309.9L239.1 312.8L242.6 311.9ZM240.6 316.9L244.4 314.0L244.3 318.7ZM239.0 318.8L238.9 321.6L242.4 320.7ZM250.8 166.7L254.7 164.5L254.6 169.1ZM249.0 168.3L248.9 171.1L252.6 170.8ZM250.6 175.5L254.5 173.2L254.4 177.9ZM248.8 177.1L248.8 179.9L252.4 179.6ZM250.4 184.2L254.3 182.0L254.1 186.6ZM248.6 185.9L248.6 188.7L252.2 188.3ZM250.2 193.0L254.0 190.7L253.9 195.4ZM248.4 194.7L248.4 197.5L252.0 197.1ZM250.0 201.8L253.8 199.5L253.7 204.1ZM248.2 203.5L248.2 206.3L251.8 205.8ZM249.8 210.6L253.6 208.2L253.5 212.8ZM248.0 212.3L248.0 215.1L251.6 214.6ZM249.6 219.4L253.4 216.9L253.3 221.6ZM247.9 221.1L247.8 223.9L251.4 223.4ZM249.4 228.2L253.2 225.7L253.1 230.3ZM247.7 229.9L247.6 232.7L251.2 232.1ZM249.2 236.9L253.0 234.4L252.9 239.1ZM247.5 238.7L247.4 241.5L250.9 240.9ZM249.0 245.7L252.8 243.2L252.6 247.8ZM247.3 247.5L247.2 250.3L250.7 249.7ZM248.8 254.5L252.5 251.9L252.4 256.6ZM247.1 256.3L247.0 259.1L250.5 258.4ZM248.6 263.3L252.3 260.7L252.2 265.3ZM246.9 265.1L246.8 267.9L250.3 267.2ZM248.4 272.1L252.1 269.4L252.0 274.0ZM246.7 273.9L246.6 276.7L250.1 276.0ZM248.2 280.8L251.9 278.2L251.8 282.8ZM246.5 282.7L246.5 285.5L249.9 284.7ZM248.0 289.6L251.7 286.9L251.6 291.5ZM246.3 291.5L246.3 294.3L249.7 293.5ZM247.8 298.4L251.5 295.6L251.4 300.3ZM246.1 300.3L246.1 303.1L249.5 302.2ZM247.6 307.2L251.3 304.4L251.1 309.0ZM245.9 309.1L245.9 311.9L249.3 311.0ZM247.4 316.0L251.0 313.1L250.9 317.8ZM245.7 317.9L245.7 320.7L249.1 319.8ZM257.9 167.0L261.7 164.8L261.6 169.4ZM256.1 168.6L256.1 171.4L259.7 171.1ZM257.7 175.7L261.5 173.5L261.4 178.1ZM255.9 177.3L255.9 180.1L259.4 179.8ZM257.4 184.4L261.3 182.2L261.1 186.8ZM255.7 186.0L255.6 188.8L259.2 188.5ZM257.2 193.1L261.0 190.8L260.9 195.4ZM255.5 194.8L255.4 197.6L259.0 197.1ZM257.0 201.8L260.8 199.5L260.6 204.1ZM255.3 203.5L255.2 206.3L258.7 205.8ZM256.7 210.5L260.5 208.2L260.4 212.8ZM255.0 212.2L255.0 215.0L258.5 214.5ZM256.5 219.3L260.3 216.9L260.2 221.5ZM254.8 220.9L254.8 223.7L258.3 223.2ZM256.3 228.0L260.0 225.5L259.9 230.1ZM254.6 229.7L254.5 232.5L258.0 231.9ZM256.1 236.7L259.8 234.2L259.7 238.8ZM254.4 238.4L254.3 241.2L257.8 240.6ZM255.8 245.4L259.6 242.9L259.4 247.5ZM254.2 247.1L254.1 249.9L257.6 249.3ZM255.6 254.1L259.3 251.5L259.2 256.1ZM253.9 255.9L253.9 258.6L257.3 258.0ZM255.4 262.8L259.1 260.2L258.9 264.8ZM253.7 264.6L253.6 267.4L257.1 266.7ZM255.1 271.5L258.8 268.9L258.7 273.5ZM253.5 273.3L253.4 276.1L256.8 275.4ZM254.9 280.2L258.6 277.6L258.5 282.2ZM253.3 282.0L253.2 284.8L256.6 284.1ZM254.7 289.0L258.3 286.2L258.2 290.8ZM253.1 290.8L253.0 293.6L256.4 292.8ZM254.5 297.7L258.1 294.9L258.0 299.5ZM252.8 299.5L252.8 302.3L256.1 301.5ZM254.2 306.4L257.9 303.6L257.7 308.2ZM252.6 308.2L252.5 311.0L255.9 310.2ZM254.0 315.1L257.6 312.3L257.5 316.9ZM252.4 317.0L252.3 319.7L255.7 318.8ZM264.9 167.3L268.7 165.1L268.5 169.7ZM263.2 168.9L263.1 171.6L266.6 171.3ZM264.6 175.9L268.4 173.7L268.3 178.3ZM262.9 177.5L262.8 180.3L266.4 180.0ZM264.4 184.6L268.1 182.3L268.0 186.9ZM262.7 186.2L262.6 189.0L266.1 188.6ZM264.1 193.2L267.9 190.9L267.7 195.5ZM262.4 194.8L262.3 197.6L265.8 197.2ZM263.9 201.9L267.6 199.5L267.5 204.1ZM262.2 203.5L262.1 206.3L265.6 205.8ZM263.6 210.5L267.3 208.2L267.2 212.7ZM261.9 212.2L261.8 214.9L265.3 214.5ZM263.3 219.1L267.1 216.8L266.9 221.3ZM261.7 220.8L261.6 223.6L265.0 223.1ZM263.1 227.8L266.8 225.4L266.6 229.9ZM261.4 229.5L261.3 232.2L264.8 231.7ZM262.8 236.4L266.5 234.0L266.4 238.5ZM261.2 238.1L261.1 240.9L264.5 240.3ZM262.6 245.1L266.2 242.6L266.1 247.1ZM260.9 246.8L260.8 249.6L264.3 249.0ZM262.3 253.7L266.0 251.2L265.8 255.7ZM260.7 255.5L260.6 258.2L264.0 257.6ZM262.1 262.4L265.7 259.8L265.6 264.3ZM260.4 264.1L260.3 266.9L263.7 266.2ZM261.8 271.0L265.4 268.4L265.3 273.0ZM260.2 272.8L260.1 275.5L263.5 274.8ZM261.5 279.6L265.2 277.0L265.0 281.6ZM259.9 281.4L259.8 284.2L263.2 283.4ZM261.3 288.3L264.9 285.6L264.7 290.2ZM259.7 290.1L259.6 292.9L262.9 292.1ZM261.0 296.9L264.6 294.2L264.5 298.8ZM259.4 298.7L259.3 301.5L262.7 300.7ZM260.8 305.6L264.4 302.8L264.2 307.4ZM259.2 307.4L259.1 310.2L262.4 309.3ZM260.5 314.2L264.1 311.4L263.9 316.0ZM258.9 316.1L258.8 318.8L262.1 317.9ZM271.8 167.6L275.5 165.4L275.4 170.0ZM270.1 169.1L270.0 171.9L273.5 171.6ZM271.5 176.2L275.2 174.0L275.1 178.5ZM269.8 177.7L269.7 180.5L273.2 180.2ZM271.2 184.7L274.9 182.5L274.8 187.0ZM269.5 186.3L269.4 189.1L272.9 188.7ZM270.9 193.3L274.6 191.1L274.5 195.6ZM269.2 194.9L269.2 197.7L272.6 197.3ZM270.6 201.9L274.3 199.6L274.2 204.1ZM269.0 203.5L268.9 206.3L272.3 205.8ZM270.3 210.5L274.0 208.1L273.9 212.7ZM268.7 212.1L268.6 214.8L272.0 214.4ZM270.1 219.0L273.7 216.7L273.6 221.2ZM268.4 220.7L268.3 223.4L271.7 222.9ZM269.8 227.6L273.4 225.2L273.3 229.7ZM268.1 229.3L268.0 232.0L271.4 231.5ZM269.5 236.2L273.1 233.7L273.0 238.3ZM267.9 237.9L267.8 240.6L271.1 240.0ZM269.2 244.8L272.8 242.3L272.7 246.8ZM267.6 246.5L267.5 249.2L270.8 248.6ZM268.9 253.3L272.5 250.8L272.4 255.3ZM267.3 255.1L267.2 257.8L270.6 257.2ZM268.6 261.9L272.2 259.4L272.1 263.9ZM267.0 263.6L266.9 266.4L270.3 265.7ZM268.4 270.5L271.9 267.9L271.8 272.4ZM266.7 272.2L266.7 275.0L270.0 274.3ZM268.1 279.0L271.6 276.4L271.5 281.0ZM266.5 280.8L266.4 283.6L269.7 282.8ZM267.8 287.6L271.3 285.0L271.2 289.5ZM266.2 289.4L266.1 292.2L269.4 291.4ZM267.5 296.2L271.0 293.5L270.9 298.0ZM265.9 298.0L265.8 300.8L269.1 299.9ZM267.2 304.8L270.7 302.0L270.6 306.6ZM265.6 306.6L265.5 309.3L268.8 308.5ZM266.9 313.3L270.4 310.6L270.3 315.1ZM265.4 315.2L265.3 317.9L268.5 317.1ZM278.5 167.9L282.2 165.7L282.1 170.2ZM276.9 169.4L276.8 172.2L280.2 171.9ZM278.2 176.4L281.9 174.2L281.7 178.7ZM276.6 178.0L276.5 180.7L279.9 180.4ZM277.9 184.9L281.6 182.7L281.4 187.2ZM276.3 186.5L276.2 189.2L279.6 188.8ZM277.6 193.4L281.3 191.2L281.1 195.7ZM276.0 195.0L275.9 197.7L279.2 197.3ZM277.3 201.9L280.9 199.6L280.8 204.1ZM275.6 203.5L275.6 206.2L278.9 205.8ZM277.0 210.4L280.6 208.1L280.4 212.6ZM275.3 212.0L275.2 214.8L278.6 214.3ZM276.7 218.9L280.3 216.6L280.1 221.1ZM275.0 220.6L274.9 223.3L278.3 222.8ZM276.4 227.4L280.0 225.0L279.8 229.5ZM274.7 229.1L274.6 231.8L278.0 231.3ZM276.0 235.9L279.6 233.5L279.5 238.0ZM274.4 237.6L274.3 240.3L277.6 239.8ZM275.7 244.4L279.3 242.0L279.1 246.5ZM274.1 246.1L274.0 248.9L277.3 248.3ZM275.4 252.9L279.0 250.5L278.8 254.9ZM273.8 254.7L273.7 257.4L277.0 256.8ZM275.1 261.5L278.7 258.9L278.5 263.4ZM273.5 263.2L273.4 265.9L276.7 265.2ZM274.8 270.0L278.3 267.4L278.2 271.9ZM273.2 271.7L273.1 274.4L276.4 273.7ZM274.5 278.5L278.0 275.9L277.8 280.4ZM272.9 280.2L272.8 283.0L276.1 282.2ZM274.2 287.0L277.7 284.3L277.5 288.8ZM272.6 288.8L272.5 291.5L275.7 290.7ZM273.9 295.5L277.3 292.8L277.2 297.3ZM272.3 297.3L272.2 300.0L275.4 299.2ZM273.6 304.0L277.0 301.3L276.9 305.8ZM272.0 305.8L271.9 308.5L275.1 307.7ZM273.2 312.5L276.7 309.8L276.5 314.2ZM271.7 314.3L271.6 317.0L274.8 316.2ZM285.2 168.2L288.9 166.0L288.7 170.5ZM283.6 169.7L283.4 172.4L286.8 172.1ZM284.9 176.6L288.5 174.5L288.3 178.9ZM283.2 178.2L283.1 180.9L286.5 180.5ZM284.5 185.0L288.1 182.9L288.0 187.3ZM282.9 186.6L282.8 189.3L286.1 189.0ZM284.2 193.5L287.8 191.3L287.6 195.7ZM282.6 195.1L282.5 197.8L285.8 197.4ZM283.8 201.9L287.4 199.7L287.3 204.1ZM282.2 203.5L282.1 206.2L285.4 205.8ZM283.5 210.4L287.1 208.1L286.9 212.5ZM281.9 212.0L281.8 214.7L285.1 214.2ZM283.2 218.8L286.7 216.5L286.6 220.9ZM281.6 220.4L281.5 223.2L284.7 222.7ZM282.8 227.3L286.4 224.9L286.2 229.3ZM281.2 228.9L281.1 231.6L284.4 231.1ZM282.5 235.7L286.0 233.3L285.8 237.8ZM280.9 237.4L280.8 240.1L284.1 239.5ZM282.2 244.1L285.7 241.7L285.5 246.2ZM280.6 245.8L280.5 248.5L283.7 247.9ZM281.8 252.6L285.3 250.1L285.1 254.6ZM280.2 254.3L280.1 257.0L283.4 256.4ZM281.5 261.0L285.0 258.5L284.8 263.0ZM279.9 262.7L279.8 265.4L283.0 264.8ZM281.1 269.5L284.6 266.9L284.4 271.4ZM279.6 271.2L279.5 273.9L282.7 273.2ZM280.8 277.9L284.3 275.3L284.1 279.8ZM279.2 279.6L279.1 282.3L282.3 281.6ZM280.5 286.3L283.9 283.7L283.7 288.2ZM278.9 288.1L278.8 290.8L282.0 290.0ZM280.1 294.8L283.6 292.1L283.4 296.6ZM278.6 296.6L278.5 299.3L281.6 298.5ZM279.8 303.2L283.2 300.5L283.0 305.0ZM278.2 305.0L278.1 307.7L281.3 306.9ZM279.4 311.7L282.9 308.9L282.7 313.4ZM277.9 313.5L277.8 316.2L280.9 315.3Z" fill="url(#bgg)"/>
<path d="M70.6 131 C70.6 122.6 73.6 118.5 81 118.4 L112 117.9 C124 117.9 131 135.6 146 135.4 L246 133.8 C256 133.6 258 119.8 268 119.4 L289 118.5 C296 118.4 299.8 121 299.8 127 L299.6 172.8 C299.6 176.2 298 177.5 295 177.3 L270 174.6 C259 173.4 259 164.2 247 164.4 L150 171.9 C138 172.9 130 191 113 192.5 L78 195.3 C73.6 195.7 70.9 194 70.8 190 Z" fill="url(#tb)"/>
<path d="M70.6 131 C70.6 122.6 73.6 118.5 81 118.4 L112 117.9 C124 117.9 131 135.6 146 135.4 L246 133.8 C256 133.6 258 119.8 268 119.4 L289 118.5 C296 118.4 299.8 121 299.8 127 L299.6 172.8 C299.6 176.2 298 177.5 295 177.3 L270 174.6 C259 173.4 259 164.2 247 164.4 L150 171.9 C138 172.9 130 191 113 192.5 L78 195.3 C73.6 195.7 70.9 194 70.8 190 Z" fill="#000" filter="url(#spk)" mask="url(#spm)"/>
<path d="M70.6 131 C70.6 122.6 73.6 118.5 81 118.4 L83.6 118.4 C76.8 119 73.7 123.4 73.7 131 L73.9 195.2 C71.8 194.6 70.9 193 70.8 190 Z" fill="#5a5753" opacity="0.8"/>
<path d="M81 118.6 L112 118.1 C124 118.1 131 135.8 146 135.6 L246 134 C256 133.8 258 120 268 119.6 L289 118.7" fill="none" stroke="#4e4a46" stroke-width="0.9" opacity="0.75"/>
<path d="M297.6 121 C299.2 122.4 299.8 124.4 299.8 127 L299.6 172.8 C299.6 175 299 176.4 297.6 177 Z" fill="#3d3b39" opacity="0.9"/>
<ellipse cx="110.8" cy="156.4" rx="6.3" ry="8.4" fill="#14120f"/>
<ellipse cx="109.2" cy="156.0" rx="4.7" ry="7.4" fill="#e6e9eb"/>
<ellipse cx="202.5" cy="151.7" rx="5.1" ry="6.8" fill="#14120f"/>
<ellipse cx="200.7" cy="151.3" rx="3.3" ry="5.6" fill="#e5e8ea"/>
<ellipse cx="276.9" cy="149.1" rx="5.1" ry="6.4" fill="#100f0d"/>
<ellipse cx="274.4" cy="148.8" rx="2.4" ry="5.1" fill="#e4e7e9"/>
<path d="M83.8 330.2 C83.8 329.2 84.6 328.8 86 328.6 L120 324.6 C131 323.6 133 333.4 146 331.8 L240 311.8 C253 309 252 291.4 266 288.6 L286 282.4 C288.8 281.8 290.2 282.6 290.2 284.8 L290.5 321 C290.5 328.6 287.6 332.6 282.6 333.8 L266 338.6 C257 340.4 256 333.6 247 335.4 L158 358.6 C141 363 146 378 128 382.6 L105 390 C95 393 86.4 389 85.5 378 Z" fill="url(#bb)"/>
<path d="M86 329.2 L120 325.2 C131 324.2 133 334 146 332.4 L240 312.4 C253 309.6 252 292 266 289.2 L286 283" fill="none" stroke="#3e3e3e" stroke-width="1.5"/>
<path d="M288.8 283 C289.8 283.4 290.2 283.8 290.2 284.8 L290.5 321 C290.5 328.6 287.6 332.6 282.6 333.8 L280 334.4 C285 332.4 287.6 328.6 287.6 321 Z" fill="#2c2c2c"/>
<path d="M83.8 330.2 L85.5 378 C85.8 383 87.6 387 91 389.6 C88.6 386.6 87.5 383 87.3 378 L86.6 329.2 Z" fill="#333"/>
<ellipse cx="120.6" cy="355.2" rx="6.4" ry="7.5" fill="#343434"/>
<ellipse cx="120.1" cy="354.9" rx="5.3" ry="6.4" fill="#0e0e0e"/>
<ellipse cx="118.1" cy="353.3" rx="4.0" ry="4.9" fill="#fbfbfb"/>
<ellipse cx="201.2" cy="332.4" rx="4.7" ry="5.8" fill="#343434"/>
<ellipse cx="200.7" cy="332.1" rx="3.6" ry="4.7" fill="#0e0e0e"/>
<ellipse cx="199.3" cy="331.2" rx="2.5" ry="3.8" fill="#fbfbfb"/>
<ellipse cx="268.8" cy="312.6" rx="4.5" ry="5.5" fill="#343434"/>
<ellipse cx="268.3" cy="312.3" rx="3.4" ry="4.4" fill="#0e0e0e"/>
<ellipse cx="266.5" cy="311.4" rx="1.4" ry="3.0" fill="#b5b5b5"/>
<path d="M6.8 230.6 L8.8 232.8 L6.8 235 M9 230.6 L11 232.8 L9 235" fill="none" stroke="#a2a2a2" stroke-width="0.7" stroke-linecap="round" stroke-linejoin="round"/>
</svg>
<svg class="a" style="left:295px;top:7px" width="95" height="85" viewBox="300 60 95 85" >
<path d="M308.8 88.6 L311.4 91 L308.8 93.4" transform="translate(620.6 0) scale(-1 1)" fill="none" stroke="#444" stroke-width="0.8" stroke-linecap="round" stroke-linejoin="round"/>
<path d="M338 84.4 L361.6 79 L374 83 L374 104 L350 110 L338 105.4 Z" fill="#ffffff" opacity="0.28"/>
<path d="M338 84.4 L350 88.6 L374 83 M350 88.6 L350 110" fill="none" stroke="#fff" stroke-width="0.5" opacity="0.8"/>
<path d="M361.6 75 V83" stroke="#2e9bd6" stroke-width="1.1"/>
<path d="M337.4 107.4 L353.6 105.4" stroke="#f07050" stroke-width="1"/>
<path d="M366.6 105.8 L377 109.2" stroke="#6aaa3a" stroke-width="1"/>
<path d="M360.2 84 L368.6 82.8 L368.2 93.6 L360.6 95 Z" fill="#cbbcc0"/>
<path d="M350.4 94.4 L360.6 92.6 L367.8 95.2 L357.6 97.6 Z" fill="#d6c9cc"/>
<path d="M350.4 94.4 L357.6 97.6 L357.6 99 L350.4 95.8 Z M357.6 97.6 L367.8 95.2 L367.8 96.6 L357.6 99 Z" fill="#b3a3a8"/>
<path d="M349.4 90.6 L357.4 89.2 M358.4 93.4 L368.6 91.6" stroke="#36566c" stroke-width="1.3" stroke-linecap="round"/>
<path d="M348.6 96.2 V104.6 M355.2 98.6 V110 M359.4 98.6 V105.4 M366 96.8 V108" stroke="#36566c" stroke-width="1.3"/>
</svg>
<span class="t" style="left:354.07px;top:11.39px;font-size:8.6px;line-height:10.32px;color:#2e9bd6;font-weight:bold;">Z</span>
<span class="t" style="left:324.27px;top:50.23px;font-size:8.2px;line-height:9.84px;color:#e24a4a;font-weight:bold;">X</span>
<span class="t" style="left:372.67px;top:52.23px;font-size:8.2px;line-height:9.84px;color:#62a62e;font-weight:bold;">Y</span>
<div style="left:341.4px;top:75.6px;width:30px;height:9px;background:rgba(255,255,255,0.5);box-shadow:inset 0 0 0 0.6px #bdbdbd;border-radius:1.2px;">
<span class="t" style="left:3.2px;top:2.09px;font-size:5px;line-height:6px;color:#555;transform:scaleX(1.080);">mm</span>
<svg class="a" style="left:21.6px;top:1.4px" width="8" height="7" viewBox="368 130 8 7" >
<path d="M369.4 131.8 H373.8 L371.6 134.6 Z" fill="#222"/>
</svg>
</div>
<div style="left:59.2px;top:360.2px;width:280.6px;height:9.6px;background:#d9d9d9;border-radius:1.5px 1.5px 0 0;">
<div style="left:0px;top:0px;width:27.4px;height:9.6px;background:#f5f5f5;box-shadow:inset -0.6px 0 0 #c6c6c6;">
<span class="t" style="left:4.1px;top:2.09px;font-size:5px;line-height:6px;color:#505050;transform:scaleX(0.946);">Standard</span>
</div>
<div style="left:27.4px;top:0px;width:23.2px;height:9.6px;background:#dcdcdc;box-shadow:inset -0.6px 0 0 #c6c6c6;">
<span class="t" style="left:4.1px;top:2.09px;font-size:5px;line-height:6px;color:#505050;transform:scaleX(0.981);">Sketch</span>
</div>
<div style="left:50.6px;top:0px;width:26.5px;height:9.6px;background:#f8f8f8;box-shadow:inset -0.6px 0 0 #c6c6c6;">
<span class="t" style="left:3.2px;top:2.09px;font-size:5px;line-height:6px;color:#505050;transform:scaleX(1.014);">Features</span>
</div>
<div style="left:77.1px;top:0px;width:28.1px;height:9.6px;background:#dcdcdc;box-shadow:inset -0.6px 0 0 #c6c6c6;">
<span class="t" style="left:4.3px;top:2.09px;font-size:5px;line-height:6px;color:#505050;transform:scaleX(0.983);">Surfaces</span>
</div>
<div style="left:105.2px;top:0px;width:32.5px;height:9.6px;background:#dcdcdc;box-shadow:inset -0.6px 0 0 #c6c6c6;">
<span class="t" style="left:3.6px;top:2.09px;font-size:5px;line-height:6px;color:#505050;transform:scaleX(1.043);">Assembly</span>
</div>
<div style="left:137.7px;top:0px;width:44.4px;height:9.6px;background:#dcdcdc;box-shadow:inset -0.6px 0 0 #c6c6c6;">
<span class="t" style="left:0.9px;top:2.09px;font-size:5px;line-height:6px;color:#505050;transform:scaleX(1.019);">Design Guidance</span>
</div>
<div style="left:182.1px;top:0px;width:19.3px;height:9.6px;background:#dcdcdc;box-shadow:inset -0.6px 0 0 #c6c6c6;">
<span class="t" style="left:3.7px;top:2.09px;font-size:5px;line-height:6px;color:#505050;transform:scaleX(0.985);">Tools</span>
</div>
<div style="left:201.4px;top:0px;width:26.9px;height:9.6px;background:#dcdcdc;box-shadow:inset -0.6px 0 0 #c6c6c6;">
<span class="t" style="left:3.8px;top:2.09px;font-size:5px;line-height:6px;color:#505050;transform:scaleX(0.956);">Lifecycle</span>
</div>
<div style="left:228.3px;top:0px;width:34.4px;height:9.6px;background:#dcdcdc;box-shadow:inset -0.6px 0 0 #c6c6c6;">
<span class="t" style="left:3.1px;top:2.09px;font-size:5px;line-height:6px;color:#505050;transform:scaleX(1.006);">Marketplace</span>
</div>
<div style="left:262.7px;top:0px;width:17.9px;height:9.6px;background:#dcdcdc;box-shadow:inset -0.6px 0 0 #c6c6c6;">
<span class="t" style="left:3.7px;top:2.09px;font-size:5px;line-height:6px;color:#505050;transform:scaleX(0.968);">View</span>
</div>
</div>
<svg class="a" style="left:58px;top:359px" width="6" height="6" viewBox="63 412 6 6" >
<path d="M63.8 413.3 H66.9 L63.8 416 Z" fill="#3b86c0"/>
</svg>
<div style="left:1.2px;top:369.6px;width:388.4px;height:21.8px;background:#f3f3f3;box-shadow:0 0.6px 1.2px rgba(0,0,0,0.35);border-radius:1px;">
<div style="left:5.8px;top:20.3px;width:283px;height:1.5px;background:#a9a9a9;border-radius:1px;">
</div>
<svg class="a" style="left:0px;top:0px" width="388.4" height="21.8" viewBox="6.2 422.6 388.4 21.8" >
<path d="M7 425.6 L8.2 427 L9.4 425.6" fill="none" stroke="#555" stroke-width="0.6" stroke-linecap="round"/>
<path d="M11.6 423.6 V442.4" stroke="#dadada" stroke-width="0.5"/>
<path d="M80.0 425.4 V441" stroke="#d2d2d2" stroke-width="0.6"/>
<path d="M119.6 425.4 V441" stroke="#d2d2d2" stroke-width="0.6"/>
<path d="M156.2 425.4 V441" stroke="#d2d2d2" stroke-width="0.6"/>
<path d="M175.4 425.4 V441" stroke="#d2d2d2" stroke-width="0.6"/>
<g transform="translate(21.3 431.6) scale(1.28)"><path d="M-3.4 -1.6 L-0.4 -3.4 L1.2 -2.4 L1.2 -0.4 L4 1 L4 3.4 L0.6 4.8 L-3.4 2.4 Z" fill="#f4f4f4" stroke="#5f5f5f" stroke-width="0.55" stroke-linejoin="round"/><path d="M-3.4 -1.6 L-1.2 -0.4 L1.2 -2.4 M-1.2 -0.4 L-1.2 1.4 L0.8 2.6 L4 1 M0.8 2.6 V4.6" fill="none" stroke="#5f5f5f" stroke-width="0.55" stroke-linejoin="round"/><rect x="-4.6" y="-4.4" width="2.6" height="2.6" fill="#2e7db5"/></g>
<path d="M26.2 438.3 H27.8 V436.7 Z" fill="#333"/>
<g transform="translate(37.5 431.6) scale(1.28)"><path d="M-4 -1.6 L-0.2 -3.8 L4 -2.2 L4 2.6 L-0.4 4.6 L-4 2.6 Z" fill="#eeeeee" stroke="#5f5f5f" stroke-width="0.55" stroke-linejoin="round"/><path d="M-4 -1.6 L-0.6 -0.2 L-0.6 1.2 L1.6 2 L1.6 3.6 M-0.6 -0.2 L1.8 -1.4" fill="none" stroke="#5f5f5f" stroke-width="0.55" stroke-linejoin="round"/><path d="M1.2 -4.2 H4.2 V-0.6 L1.2 -1.8 Z" fill="#bdbdbd" stroke="#6a6a6a" stroke-width="0.4"/></g>
<g transform="translate(54.0 431.6) scale(1.28)"><rect x="-4.3" y="-4.3" width="8.6" height="8.6" rx="0.6" fill="#2f6f9f"/><rect x="-2.8" y="-4.3" width="5.6" height="3.9" fill="#9dbfd6"/><rect x="-2.2" y="-3.6" width="4.4" height="1.3" fill="#b9b9b9"/><rect x="-2.6" y="1.2" width="5.2" height="3.1" fill="#5d8fb3"/><rect x="0.2" y="1.8" width="1.4" height="2" fill="#2a5f88"/></g>
<path d="M58.9 438.3 H60.5 V436.7 Z" fill="#333"/>
<g transform="translate(70.9 431.6) scale(1.28)"><circle r="3.6" fill="#fff"/><circle r="3.1" fill="none" stroke="#3b7fb0" stroke-width="2.3" stroke-dasharray="3.6 1.27"/><circle r="4.3" fill="none" stroke="#1f6597" stroke-width="0.4"/></g>
<path d="M75.8 438.3 H77.4 V436.7 Z" fill="#333"/>
<g transform="translate(90.4 431.6) scale(1.28)"><rect x="-1.6" y="-4.6" width="5.8" height="3.4" fill="#fafafa" stroke="#5f5f5f" stroke-width="0.55" stroke-linejoin="round"/><rect x="-4" y="-2.8" width="7.4" height="3" fill="#f2f2f2" stroke="#5f5f5f" stroke-width="0.55" stroke-linejoin="round"/><rect x="-4" y="-2.8" width="7.4" height="1" fill="#2e74a8"/><rect x="-4" y="1" width="8.2" height="3.4" fill="#f2f2f2" stroke="#5f5f5f" stroke-width="0.55" stroke-linejoin="round"/><rect x="-4" y="1" width="8.2" height="1.1" fill="#3f8fc4"/><path d="M-3 3.3 H3" stroke="#444" stroke-width="0.5"/></g>
<g transform="translate(110.0 431.6) scale(1.28)"><circle r="3.7" fill="none" stroke="#777" stroke-width="1.5" stroke-dasharray="1.45 1.456"/><circle r="3.2" fill="#f6f6f6" stroke="#777" stroke-width="0.5"/><circle r="1.5" fill="#f0f0f0" stroke="#777" stroke-width="0.5"/></g>
<path d="M114.9 438.3 H116.5 V436.7 Z" fill="#333"/>
<g transform="translate(129.4 431.6) scale(1.28)"><path d="M-0.4 -2.6 C4.6 -3 5.4 3.6 0.4 4.4 L-0.6 2.4 C2.4 1.8 2.2 -0.6 -0.4 -0.4 L-0.4 1.2 L-4.8 -1.8 L-0.4 -4.6 Z" fill="#3a86bb" stroke="#1f6597" stroke-width="0.45" stroke-linejoin="round"/></g>
<g transform="translate(146.9 431.6) scale(1.28)"><path d="M0.4 -2.6 C-4.6 -3 -5.4 3.6 -0.4 4.4 L0.6 2.4 C-2.4 1.8 -2.2 -0.6 0.4 -0.4 L0.4 1.2 L4.8 -1.8 L0.4 -4.6 Z" fill="#a9cce3" stroke="#8db6d2" stroke-width="0.4"/></g>
<g transform="translate(166.0 431.6) scale(1.28)"><circle r="4.5" fill="#fbfbfb" stroke="#6f6f6f" stroke-width="0.7"/></g>
<path d="M170.9 438.3 H172.5 V436.7 Z" fill="#333"/>
<g transform="translate(185.0 431.6) scale(1.28)"><path d="M-4.2 -2.4 L0 -4.8 L4.2 -2.4 L4.2 2.4 L0 4.8 L-4.2 2.4 Z" fill="#fbfbfb" stroke="#5f5f5f" stroke-width="0.55" stroke-linejoin="round"/><path d="M0 0 L4.2 -2.4 L4.2 2.4 L0 4.8 Z" fill="#e4e4e4"/><path d="M-4.2 -2.4 L0 0 L4.2 -2.4 M0 0 V4.8" fill="none" stroke="#5f5f5f" stroke-width="0.55" stroke-linejoin="round"/></g>
<path d="M189.9 438.3 H191.5 V436.7 Z" fill="#333"/>
<g transform="translate(202.2 431.6) scale(1.28)"><path d="M-2.8 -3 L0.4 -4.2 L2.8 -3.6 L2.8 3.2 L-0.4 4.4 L-2.8 3.8 Z" fill="#3f8fc4" stroke="#1f6597" stroke-width="0.45" stroke-linejoin="round"/><path d="M-2.8 -3 L-0.4 -2.4 L-0.4 4.4 Z" fill="#83c0e4" opacity="0.7"/><path d="M-0.4 -2.4 L2.8 -3.6" fill="none" stroke="#1f6597" stroke-width="0.45" stroke-linejoin="round"/></g>
<path d="M207.1 438.3 H208.7 V436.7 Z" fill="#333"/>
<g transform="translate(218.6 431.6) scale(1.28)"><path d="M-0.8 -3 L2.2 -4.6 L4.8 -3.2 L4.8 2.8 L2 4.4 L-0.8 3 Z" fill="#f6f6f6" stroke="#5f5f5f" stroke-width="0.55" stroke-linejoin="round"/><path d="M-4.6 -1.4 L-2.4 -2.6 L1.8 -1.6 L1.8 2.4 L-0.8 3.6 L-4.6 2.4 Z" fill="#3f8fc4" stroke="#1f6597" stroke-width="0.45" stroke-linejoin="round"/><path d="M-4.6 -1.4 L-0.8 -0.4 L1.8 -1.6 L-2.4 -2.6 Z" fill="#83c0e4"/></g>
<path d="M223.5 438.3 H225.1 V436.7 Z" fill="#333"/>
<g transform="translate(235.4 431.6) scale(1.28)"><path d="M-2.6 -3.8 C4 -6 6.2 2.8 0.6 4.6 C-1.6 5.2 -4.2 4 -3.6 2.2 C-2.8 0.8 -1 2.4 0.2 1.6 C2.4 0.2 0.8 -2.8 -1.8 -1.6 Z" fill="#3f8fc4" stroke="#1f6597" stroke-width="0.45" stroke-linejoin="round"/><path d="M-1.4 -3.4 C2.6 -4.4 4.2 -0.4 2.6 2" fill="none" stroke="#83c0e4" stroke-width="0.9" opacity="0.8"/><path d="M-3.6 -1.4 L-0.6 0.4" stroke="#333" stroke-width="0.5"/></g>
<path d="M240.3 438.3 H241.9 V436.7 Z" fill="#333"/>
<g transform="translate(252.0 431.6) scale(1.28)"><path d="M-4.8 3.2 C-4.8 0.6 -2 1.6 -1.6 -0.6 C-1 -3.6 1.6 -5 4.4 -3.8 C5.4 -3.2 5 -1.6 3.8 -1.6 C2 -2 1.6 -0.6 1.2 1.2 C0.6 4.4 -2 5.2 -3.8 4.8 C-4.6 4.6 -4.8 4 -4.8 3.2 Z" fill="#3f8fc4" stroke="#1f6597" stroke-width="0.45" stroke-linejoin="round"/><path d="M-3.8 2.6 C-2 2.4 -0.8 1.4 -0.4 -0.6 C0 -2.6 1.8 -3.6 3.6 -3.2" fill="none" stroke="#83c0e4" stroke-width="0.9" opacity="0.8"/></g>
<path d="M256.9 438.3 H258.5 V436.7 Z" fill="#333"/>
<g transform="translate(268.4 431.6) scale(1.28)"><path d="M-1.6 -4.4 H1.6 L1.8 0.6 C2 2.2 4.4 2.4 4.6 3.8 C3 5.2 -3 5.2 -4.6 3.8 C-4.4 2.4 -2 2.2 -1.8 0.6 Z" fill="#3f8fc4" stroke="#1f6597" stroke-width="0.45" stroke-linejoin="round"/><path d="M-0.8 -4 L-0.8 1 C-0.8 2.4 -2.6 3 -3.4 3.8" fill="none" stroke="#83c0e4" stroke-width="0.9" opacity="0.7"/><ellipse cx="0" cy="-4.4" rx="1.6" ry="0.6" fill="#83c0e4" stroke="#1f6597" stroke-width="0.45" stroke-linejoin="round"/></g>
<path d="M273.3 438.3 H274.9 V436.7 Z" fill="#333"/>
<g transform="translate(285.4 431.6) scale(1.28)"><path d="M-3.8 -2.2 L0.2 -4.2 L4 -2.8 L4 2.4 L0 4.4 L-3.8 2.8 Z" fill="#f8f8f8" stroke="#5f5f5f" stroke-width="0.55" stroke-linejoin="round"/><path d="M-2.6 -1.8 L0.6 -3.2 L4 -2 L4 0.2 L0.4 1.6 L-2.6 0.4 Z" fill="#3f8fc4" stroke="#1f6597" stroke-width="0.45" stroke-linejoin="round"/><path d="M-3.8 -2.2 L-3.8 2.8 L0 4.4 L0 1.6" fill="none" stroke="#5f5f5f" stroke-width="0.55" stroke-linejoin="round"/></g>
<path d="M290.3 438.3 H291.9 V436.7 Z" fill="#333"/>
<g transform="translate(302.6 431.6) scale(1.28)"><path d="M-4 -2.8 L0.2 -4.4 L4.2 -2.8 L4.2 2.8 L0 4.4 L-4 2.8 Z" fill="#f4f4f4" stroke="#5f5f5f" stroke-width="0.55" stroke-linejoin="round"/><path d="M-4 -2.8 L0 -1.2 L4.2 -2.8 M0 -1.2 V4.4" fill="none" stroke="#5f5f5f" stroke-width="0.55" stroke-linejoin="round"/><circle cx="0.8" cy="0.9" r="2.3" fill="#3f8fc4" stroke="#1f6597" stroke-width="0.45" stroke-linejoin="round"/><circle cx="0.6" cy="0.8" r="1" fill="#e9f3f9"/></g>
<path d="M307.5 438.3 H309.1 V436.7 Z" fill="#333"/>
<g transform="translate(318.8 431.6) scale(1.28)"><path d="M-4.6 -3 L-0.4 -4 L4.6 -0.2 L4.6 4 L-4.6 4 Z" fill="#3f8fc4" stroke="#1f6597" stroke-width="0.45" stroke-linejoin="round"/><path d="M-4.6 -3 L-0.4 -4 L4.6 -0.2 L0.6 0.6 Z" fill="#83c0e4"/><rect x="1.6" y="1.4" width="3" height="2.6" fill="#fff" stroke="#1f6597" stroke-width="0.45" stroke-linejoin="round"/></g>
<g transform="translate(335.4 431.6) scale(1.28)"><path d="M-3.8 -3 L0.2 -4.4 L4 -3.2 L4 2.8 L0 4.4 L-3.8 3.2 Z" fill="#efefef" stroke="#5f5f5f" stroke-width="0.55" stroke-linejoin="round"/><path d="M-0.6 -1.2 L4 -2.6 L4 2.8 L0 4.4 L-0.6 4.2 Z" fill="#3f8fc4" stroke="#1f6597" stroke-width="0.45" stroke-linejoin="round"/><path d="M0 1.8 L2.2 1 L2.2 3.6 L0 4.4 Z" fill="#83c0e4"/><path d="M-3.8 -3 L-0.6 -1.8 L4 -3.2" fill="none" stroke="#5f5f5f" stroke-width="0.55" stroke-linejoin="round"/></g>
<g transform="translate(350.8 431.6) scale(1.28)"><path d="M-4.6 -0.4 L-1.4 -3 L3.8 -2.4 L3.8 1.6 L0.4 4 L-4.6 3.2 Z" fill="#3f8fc4" stroke="#1f6597" stroke-width="0.45" stroke-linejoin="round"/><path d="M-1.4 -3 L3.8 -2.4 L0.8 -0.2 L-4.6 -0.4 Z" fill="#eaf3f9" stroke="#1f6597" stroke-width="0.45" stroke-linejoin="round"/><path d="M2.6 2.6 H5.2 V1.8 L6.6 3 L5.2 4.2 V3.4 H2.6 Z" fill="#222"/></g>
<g transform="translate(367.8 431.6) scale(1.28)"><path d="M-4.2 4.2 L-1.6 -4.2 L0.2 -3.6 L1 4.2 Z" fill="#3f8fc4" stroke="#1f6597" stroke-width="0.45" stroke-linejoin="round"/><path d="M-1.6 -4.2 L-0.8 -4 L-2.2 4.2 L-4.2 4.2 Z" fill="#83c0e4" opacity="0.7"/><path d="M1.4 -2.4 L5 3 L1.8 4.2 Z" fill="#f4f4f4" stroke="#5f5f5f" stroke-width="0.55" stroke-linejoin="round"/></g>
<g transform="translate(384.8 431.6) scale(1.28)"><g fill="#f8f8f8" stroke="#5f5f5f" stroke-width="0.55" stroke-linejoin="round"><rect x="-0.9" y="-4.4" width="2.4" height="2.8" rx="0.7"/><rect x="2.4" y="-4.4" width="2.4" height="2.8" rx="0.7"/><rect x="-0.9" y="0.6" width="2.4" height="2.8" rx="0.7"/><rect x="-4.2" y="-4.4" width="2.4" height="2.8" rx="0.7"/></g><path d="M2.4 3.4 V1.4 Q2.4 0.6 3.2 0.6 H4.4" fill="none" stroke="#5f5f5f" stroke-width="0.55" stroke-linejoin="round"/><rect x="-4.3" y="0.4" width="2.6" height="3.4" rx="0.7" fill="#3f8fc4" stroke="#1f6597" stroke-width="0.45" stroke-linejoin="round"/></g>
<path d="M389.7 438.3 H391.3 V436.7 Z" fill="#333"/>
</svg>
<span class="t" style="left:157.05px;top:3.86px;font-size:9px;line-height:10.8px;color:#2f7fb6;font-weight:bold;">?</span>
</div>
</div>
</section>
<section style="left:401.2px;top:35px;width:398.2px;height:413.6px;background:#fff;box-shadow:0 0 0 0.7px #e4e4e4;">
<svg class="a" style="left:2.8px;top:5px" width="9" height="9" viewBox="404 40 9 9" >
<rect x="405" y="40.6" width="7.2" height="7.2" rx="0.5" fill="#0f5f90"/><path d="M406.6 46.4 L408.6 41.9 L410.6 46.4 M407.1 45.2 H410.1" fill="none" stroke="#fff" stroke-width="0.8"/>
</svg>
<span class="t" style="left:15.1px;top:6.36px;font-size:5.4px;line-height:6.48px;color:#6b6b6b;font-weight:bold;transform:scaleX(0.987);">Eco Design Assessment</span>
<svg class="a" style="left:338.8px;top:3px" width="56" height="12" viewBox="740 38 56 12" >
<path d="M746.2 43.7 H752" stroke="#666" stroke-width="0.8"/>
<path d="M764.4 40.5 h2.0 l-2.0 2.0 Z M770.8 40.5 h-2.0 l2.0 2.0 Z M764.4 46.9 h2.0 l-2.0 -2.0 Z M770.8 46.9 h-2.0 l2.0 -2.0 Z" fill="#555"/><path d="M765.0 41.1 L766.7 42.8 M770.2 41.1 L768.5 42.8 M765.0 46.3 L766.7 44.6 M770.2 46.3 L768.5 44.6" stroke="#555" stroke-width="0.6" fill="none"/>
<path d="M783.3 43.2 L785.7 45.4 L788.1 43.2" fill="none" stroke="#555" stroke-width="0.8" stroke-linecap="round" stroke-linejoin="round"/>
</svg>
<div style="left:3.8px;top:18.2px;width:390px;height:14.2px;background:#f1f1f1;box-shadow:0 1px 1.5px rgba(0,0,0,0.22);">
<div style="left:0px;top:0px;width:75px;height:14.2px;background:#6e6e6e;">
<span class="t" style="left:4.6px;top:3.94px;font-size:5.6px;line-height:6.72px;color:#fff;transform:scaleX(0.981);">TRACI v2.1</span>
<svg class="a" style="left:65px;top:3.8px" width="8" height="8" viewBox="470 57 8 8" >
<path d="M471.4 58.9 H476.6 L474 62.3 Z" fill="#fff"/>
</svg>
</div>
<svg class="a" style="left:76px;top:1.8px" width="8" height="10" viewBox="481 55 8 10" >
<path d="M484.6 58.7 L483.1 60.3 L484.6 61.9" fill="none" stroke="#333" stroke-width="0.8" stroke-linecap="round" stroke-linejoin="round"/>
</svg>
<div style="left:82.2px;top:0px;width:0.5px;height:14.2px;background:#dcdcdc;">
</div>
<svg class="a" style="left:86px;top:2.8px" width="9" height="9" viewBox="491 56 9 9" >
<circle cx="495.2" cy="60.2" r="2.5" fill="#2b5f85"/><path d="M493.2 59 C494.4 58 495.6 60.4 497.4 59.2 M493 61.2 C494.4 60.4 495.8 62.4 497.2 61.4" stroke="#cfe3ef" stroke-width="0.6" fill="none"/><circle cx="495.2" cy="60.2" r="2.5" fill="none" stroke="#3a3a3a" stroke-width="0.5"/>
</svg>
<span class="t" style="left:100px;top:3.94px;font-size:5.6px;line-height:6.72px;color:#444;transform:scaleX(1.087);">Lattice_Design_Tra[..]</span>
<div style="left:170px;top:0px;width:60.4px;height:15.4px;background:#fff;">
<svg class="a" style="left:4px;top:2.8px" width="8" height="9" viewBox="579 56 8 9" >
<path d="M582.6 57.2 V63.4" stroke="#2f7fb0" stroke-width="0.7"/><rect x="579.8" y="58.8" width="2.1" height="3" fill="#2f7fb0"/><rect x="583.3" y="58.2" width="2.3" height="4.2" fill="none" stroke="#2f7fb0" stroke-width="0.7"/>
</svg>
<span class="t" style="left:14px;top:3.94px;font-size:5.6px;line-height:6.72px;color:#3d8fb2;transform:scaleX(1.014);">Comparison</span>
<svg class="a" style="left:49px;top:3.8px" width="8" height="8" viewBox="624 57 8 8" >
<path d="M625.8 59.6 L627.6 61.4 L629.4 59.6" fill="none" stroke="#3b8cb8" stroke-width="0.8" stroke-linecap="round" stroke-linejoin="round"/>
</svg>
</div>
<svg class="a" style="left:231px;top:1.8px" width="24" height="10" viewBox="636 55 24 10" >
<path d="M638.3 58.7 L639.8 60.3 L638.3 61.9" fill="none" stroke="#333" stroke-width="0.8" stroke-linecap="round" stroke-linejoin="round"/>
<path d="M651.2 60.3 H656.4 M653.8 57.7 V62.9" stroke="#444" stroke-width="0.9"/>
</svg>
<div style="left:238.6px;top:0px;width:0.5px;height:14.2px;background:#dcdcdc;">
</div>
</div>
<div style="left:391.5px;top:35px;width:2.3px;height:265.4px;background:#9b9b9b;border-radius:1px;">
</div>
<div style="left:52.6px;top:51px;width:310.4px;height:200.4px;background:#fff;box-shadow:inset 0 0 0 0.6px #e6e6e6;">
<div style="left:0px;top:0px;width:310.4px;height:12.2px;background:#f0f0f0;">
<span class="t" style="left:5px;top:2.94px;font-size:5.6px;line-height:6.72px;color:#3a8dc6;font-weight:bold;transform:scaleX(1.075);">Comparison Chart</span>
</div>
<span class="t" style="left:112.5px;top:13.11px;font-size:8.4px;line-height:10.08px;color:#2e2e2e;transform:scaleX(0.964);">Alternatives Comparison</span>
<svg class="a" style="left:86.2px;top:24px" width="150" height="140" viewBox="540 110 150 140" >
<path d="M591.9 128.5 L628.1 128.5 L655.9 151.8 L662.2 187.5 L644.1 218.9 L610.0 231.3 L575.9 218.9 L557.8 187.5 L564.1 151.8 Z M610.0 178.3 L591.9 128.5 M610.0 178.3 L628.1 128.5 M610.0 178.3 L655.9 151.8 M610.0 178.3 L662.2 187.5 M610.0 178.3 L644.1 218.9 M610.0 178.3 L610.0 231.3 M610.0 178.3 L575.9 218.9 M610.0 178.3 L557.8 187.5 M610.0 178.3 L564.1 151.8" fill="none" stroke="#e6e6e6" stroke-width="0.45"/>
<path d="M606.6 169.1 L614.2 166.6 L615.7 175.0 L624.0 180.8 L616.2 185.7 L610.0 214.3 L590.7 201.3 L574.5 184.6 L598.7 171.8 Z" fill="rgba(100,172,233,0.80)" stroke="#6aaee8" stroke-width="0.8" stroke-linejoin="round"/>
<circle cx="606.6" cy="169.1" r="1.15" fill="#6aaee8"/><circle cx="614.2" cy="166.6" r="1.15" fill="#6aaee8"/><circle cx="615.7" cy="175.0" r="1.15" fill="#6aaee8"/><circle cx="624.0" cy="180.8" r="1.15" fill="#6aaee8"/><circle cx="616.2" cy="185.7" r="1.15" fill="#6aaee8"/><circle cx="610.0" cy="214.3" r="1.15" fill="#6aaee8"/><circle cx="590.7" cy="201.3" r="1.15" fill="#6aaee8"/><circle cx="574.5" cy="184.6" r="1.15" fill="#6aaee8"/><circle cx="598.7" cy="171.8" r="1.15" fill="#6aaee8"/>
<path d="M597.8 144.8 L622.2 144.8 L641.2 160.3 L645.4 184.5 L633.1 205.9 L610.0 198.3 L586.9 205.9 L583.2 183.0 L579.0 160.4 Z" fill="rgba(30,160,88,0.76)" stroke="#27a35c" stroke-width="0.8" stroke-linejoin="round"/>
<circle cx="597.8" cy="144.8" r="1.15" fill="#27a35c"/><circle cx="622.2" cy="144.8" r="1.15" fill="#27a35c"/><circle cx="641.2" cy="160.3" r="1.15" fill="#27a35c"/><circle cx="645.4" cy="184.5" r="1.15" fill="#27a35c"/><circle cx="633.1" cy="205.9" r="1.15" fill="#27a35c"/><circle cx="610.0" cy="198.3" r="1.15" fill="#27a35c"/><circle cx="586.9" cy="205.9" r="1.15" fill="#27a35c"/><circle cx="583.2" cy="183.0" r="1.15" fill="#27a35c"/><circle cx="579.0" cy="160.4" r="1.15" fill="#27a35c"/>
</svg>
<span class="t" style="left:121.25px;top:31.26px;font-size:4.7px;line-height:5.64px;color:#666;transform:scaleX(1.075);">Carcinogenic</span>
<span class="t" style="left:128.75px;top:37.26px;font-size:4.7px;line-height:5.64px;color:#666;transform:scaleX(1.054);">effects</span>
<span class="t" style="left:176.7px;top:31.26px;font-size:4.7px;line-height:5.64px;color:#666;transform:scaleX(1.054);">Photochemical</span>
<span class="t" style="left:176.7px;top:37.26px;font-size:4.7px;line-height:5.64px;color:#666;transform:scaleX(1.143);">oxidation</span>
<span class="t" style="left:208px;top:57.06px;font-size:4.7px;line-height:5.64px;color:#666;transform:scaleX(1.016);">Global</span>
<span class="t" style="left:208px;top:63.06px;font-size:4.7px;line-height:5.64px;color:#666;transform:scaleX(1.064);">warming</span>
<span class="t" style="left:215.1px;top:100.46px;font-size:4.7px;line-height:5.64px;color:#666;transform:scaleX(1.072);">Eutrophication</span>
<span class="t" style="left:194.6px;top:135.66px;font-size:4.7px;line-height:5.64px;color:#666;transform:scaleX(1.085);">Acidification</span>
<span class="t" style="left:150.7px;top:146.56px;font-size:4.7px;line-height:5.64px;color:#666;transform:scaleX(0.895);">Ozone</span>
<span class="t" style="left:146.6px;top:152.46px;font-size:4.7px;line-height:5.64px;color:#666;transform:scaleX(1.080);">depletion</span>
<span class="t" style="left:94px;top:132.56px;font-size:4.7px;line-height:5.64px;color:#666;transform:scaleX(0.991);">Freshwater</span>
<span class="t" style="left:94px;top:138.26px;font-size:4.7px;line-height:5.64px;color:#666;transform:scaleX(1.037);">Ecotoxicity</span>
<span class="t" style="left:86.2px;top:94.16px;font-size:4.7px;line-height:5.64px;color:#666;transform:scaleX(1.090);">Non-</span>
<span class="t" style="left:69.1px;top:100.16px;font-size:4.7px;line-height:5.64px;color:#666;transform:scaleX(1.069);">carcinogenic</span>
<span class="t" style="left:82.9px;top:105.96px;font-size:4.7px;line-height:5.64px;color:#666;transform:scaleX(1.046);">effects</span>
<span class="t" style="left:79.5px;top:57.06px;font-size:4.7px;line-height:5.64px;color:#666;transform:scaleX(1.044);">Respiratory</span>
<span class="t" style="left:90.6px;top:63.06px;font-size:4.7px;line-height:5.64px;color:#666;transform:scaleX(1.017);">effects</span>
<div style="left:55px;top:163.5px;width:4.4px;height:4.4px;background:#7cb5ec;border-radius:50%;">
</div>
<span class="t" style="left:62.7px;top:162.89px;font-size:5px;line-height:6px;color:#333;font-weight:bold;transform:scaleX(1.005);">Track Roller Mounting Plate A</span>
<div style="left:143.6px;top:163.5px;width:4.4px;height:4.4px;background:#27a35c;border-radius:50%;">
</div>
<span class="t" style="left:151.5px;top:162.89px;font-size:5px;line-height:6px;color:#333;font-weight:bold;transform:scaleX(0.984);">Lattice_Design_Track Roller Mounting Plate A</span>
<span class="t" style="left:53.1px;top:179.34px;font-size:5.6px;line-height:6.72px;color:#666;transform:scaleX(0.987);">Comparing :</span>
<div style="left:94.2px;top:176px;width:155px;height:13.4px;background:#fff;box-shadow:inset 0 0 0 0.6px #dcdcdc;border-radius:1.5px;">
<div style="left:4.3px;top:2.3px;width:70.9px;height:9.2px;background:#3d9fdc;border-radius:1px;">
<span class="t" style="left:2.7px;top:1.46px;font-size:5.4px;line-height:6.48px;color:#fff;transform:scaleX(1.099);">Track Roller Mount[..]</span>
<div style="left:60.9px;top:0px;width:0.5px;height:9.2px;background:#8cc8ee;">
</div>
<svg class="a" style="left:62.7px;top:0.7px" width="8" height="8" viewBox="615 265 8 8" >
<path d="M616.5 267.1 L620.1 270.7 M620.1 267.1 L616.5 270.7" stroke="#fff" stroke-width="0.9" stroke-linecap="round"/>
</svg>
</div>
<div style="left:76.3px;top:2.3px;width:73.2px;height:9.2px;background:#3d9fdc;border-radius:1px;">
<span class="t" style="left:2.7px;top:1.46px;font-size:5.4px;line-height:6.48px;color:#fff;transform:scaleX(1.083);">Lattice_Design_Tra[..]</span>
<div style="left:62.5px;top:0px;width:0.5px;height:9.2px;background:#8cc8ee;">
</div>
<svg class="a" style="left:64.7px;top:0.7px" width="8" height="8" viewBox="689 265 8 8" >
<path d="M690.7 267.1 L694.3 270.7 M694.3 267.1 L690.7 270.7" stroke="#fff" stroke-width="0.9" stroke-linecap="round"/>
</svg>
</div>
</div>
</div>
<div style="left:52.6px;top:260px;width:310.4px;height:154px;background:#fff;box-shadow:inset 0 0 0 0.6px #e6e6e6;">
<div style="left:0px;top:0px;width:310.4px;height:11.8px;background:#f0f0f0;">
<span class="t" style="left:5px;top:2.64px;font-size:5.6px;line-height:6.72px;color:#3a8dc6;font-weight:bold;transform:scaleX(1.083);">Structure Comparison</span>
</div>
<span class="t" style="left:93px;top:18.98px;font-size:7.6px;line-height:9.12px;color:#333;transform:scaleX(0.977);">Structure Comparison</span>
<div style="left:173.2px;top:18.4px;width:44px;height:10.2px;background:#3d9fdc;border-radius:1.5px;">
<svg class="a" style="left:5px;top:1.6px" width="9" height="8" viewBox="632 315 9 8" >
<path d="M634 316 V321.6 M634 316.4 H636.2 V318.8 H634 M638.2 316 V320" stroke="#fff" stroke-width="0.8" fill="none"/><path d="M636.6 319.4 L638.2 321.2 L639.8 319.4" fill="none" stroke="#fff" stroke-width="0.7"/>
</svg>
<span class="t" style="left:17.4px;top:2.19px;font-size:5px;line-height:6px;color:#fff;transform:scaleX(0.991);">Compute</span>
</div>
<span class="t" style="left:57.7px;top:38.66px;font-size:5.4px;line-height:6.48px;color:#444;">Item</span>
<div style="left:72.2px;top:36.8px;width:3.4px;height:10.4px;background:#f2d32c;">
</div>
<div style="left:75.6px;top:36.8px;width:64.2px;height:10.4px;background:#fff;box-shadow:inset 0 0 0 0.6px #c9c9c9;">
<span class="t" style="left:3.1px;top:2.41px;font-size:4.8px;line-height:5.76px;color:#b9b9b9;transform:scaleX(1.040);">Select item</span>
<div style="left:55.9px;top:0px;width:8.3px;height:10.4px;background:#f6f6f6;box-shadow:inset 0 0 0 0.6px #c9c9c9;">
<svg class="a" style="left:0.7px;top:1.2px" width="7" height="8" viewBox="586 333 7 8" >
<path d="M587.3 335.6 H591.7 L589.5 338.6 Z" fill="#222"/>
</svg>
</div>
</div>
<span class="t" style="left:145.2px;top:38.66px;font-size:5.4px;line-height:6.48px;color:#444;transform:scaleX(1.051);">Compare with</span>
<div style="left:183.7px;top:36.8px;width:3.4px;height:10.4px;background:#1f9ad6;">
</div>
<div style="left:187.1px;top:36.8px;width:64.8px;height:10.4px;background:#fff;box-shadow:inset 0 0 0 0.6px #c9c9c9;">
<span class="t" style="left:3.5px;top:2.41px;font-size:4.8px;line-height:5.76px;color:#b9b9b9;transform:scaleX(1.036);">Select item</span>
<div style="left:56.5px;top:0px;width:8.3px;height:10.4px;background:#f6f6f6;box-shadow:inset 0 0 0 0.6px #c9c9c9;">
<svg class="a" style="left:0.6px;top:1.2px" width="7" height="8" viewBox="698 333 7 8" >
<path d="M699.4 335.6 H703.8 L701.6 338.6 Z" fill="#222"/>
</svg>
</div>
</div>
<svg class="a" style="left:96.2px;top:60px" width="120" height="90" viewBox="550 355 120 90" >
<path fill-rule="evenodd" fill="#a7a7a7" d="M571.8 363.2 A14.9 14.9 0 0 1 579.4 391 V410.6 H597.6 V424 H579.4 V429.4 H564.4 V391.2 A14.9 14.9 0 0 1 571.8 363.2 Z M571.8 371.2 A6.8 7.6 0 1 0 571.8 386.4 A6.8 7.6 0 1 0 571.8 371.2 Z"/>
<path fill="#a7a7a7" d="M605.6 363.4 H612.6 V379.4 H605.6 Z M605.6 388 H612.6 V402.4 H605.6 Z M605.6 411 H612.6 V424 H605.6 Z"/>
<path fill-rule="evenodd" fill="#a7a7a7" d="M646.6 363.2 A14.7 14.7 0 0 1 653.2 391.2 V411 A13 13 0 0 1 640.2 424 H620.4 V410.6 H636 A2 2 0 0 0 638 408.6 V390.4 A14.7 14.7 0 0 1 646.6 363.2 Z M646.8 370 A6.8 7.5 0 1 0 646.8 385 A6.8 7.5 0 1 0 646.8 370 Z"/>
</svg>
</div>
<svg class="a" style="left:6.8px;top:391px" width="14" height="14" viewBox="408 426 14 14" >
<g stroke="#444" stroke-width="0.7" fill="none"><rect x="413.4" y="429.2" width="3.4" height="5.6" rx="1.2"/><path d="M414.2 430.6 V433.6 M415.9 430.6 V433.6" stroke-width="0.5"/><path d="M411.2 429 L412.2 429.8 M410.8 432.2 H412 M411.4 435.4 L412.4 434.6 M418.8 428.6 L417.8 429.6 M419.4 431.8 H418.2 M419 435.4 L418 434.6"/></g>
</svg>
</section>
</body></html>
